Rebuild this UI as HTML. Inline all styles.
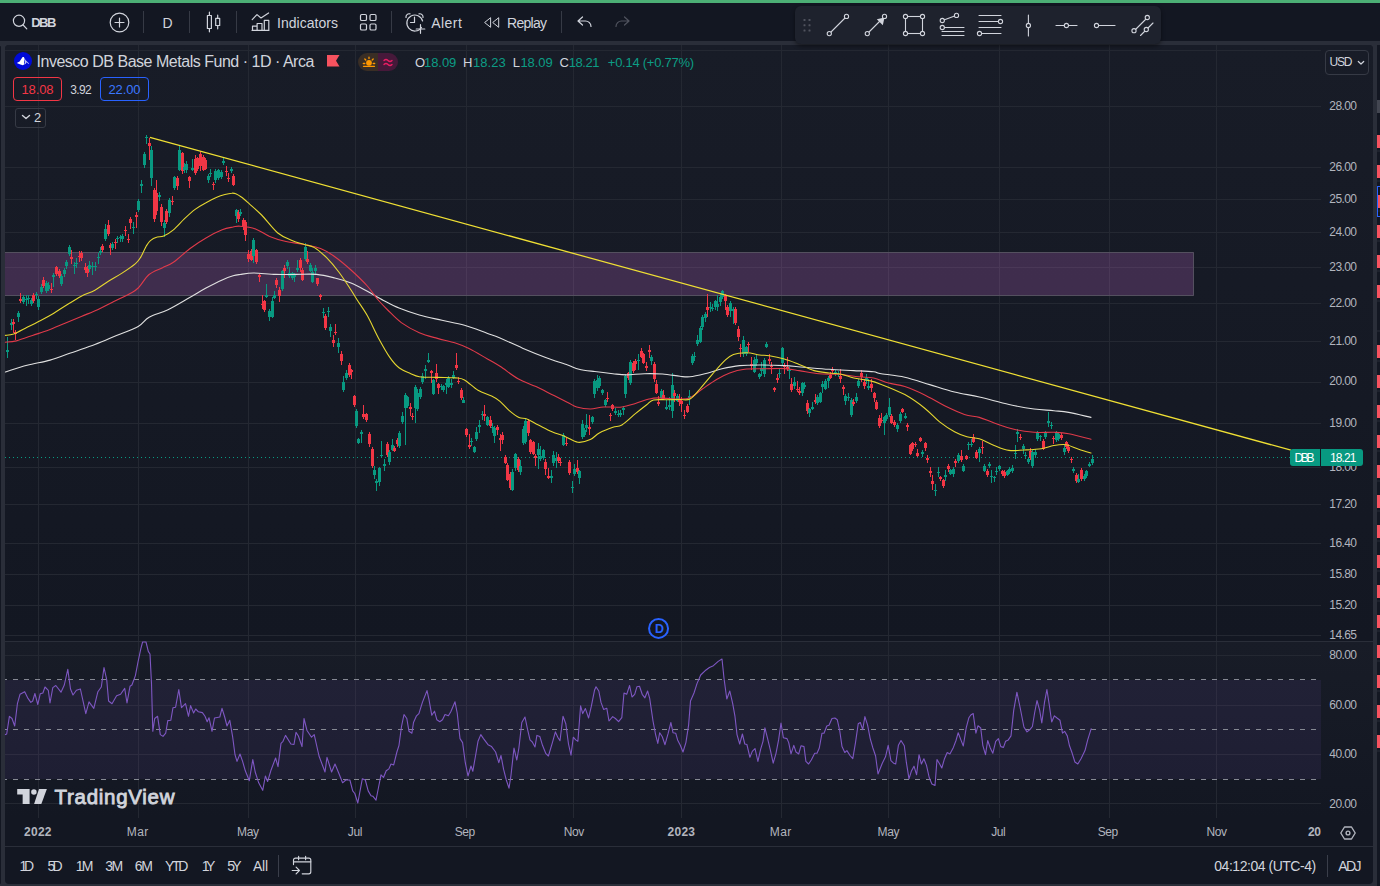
<!DOCTYPE html>
<html lang="en"><head><meta charset="utf-8"><title>DBB 18.21 — TradingView</title>
<style>
*{box-sizing:border-box;margin:0;padding:0}
html,body{width:1380px;height:886px;overflow:hidden;background:#2a2e39;font-family:"Liberation Sans",sans-serif;color:#d1d4dc}
.abs{position:absolute}
#greenbar{left:0;top:0;width:1380px;height:3px;background:#4caf75}
#topbar{left:0;top:3px;width:1380px;height:38px;background:#131722}
#chartbox{left:5px;top:45px;width:1368px;height:839px;border-radius:4px;background:#131722;overflow:hidden}
#pane1{left:0;top:0;width:1368px;height:596px;background:linear-gradient(#181c27,#131722)}
#pane2{left:0;top:597px;width:1368px;height:176px;background:linear-gradient(#181c27,#131722)}
#side{left:1377px;top:45px;width:3px;height:841px;background:#131722}
.plot{position:absolute;left:0;top:0}
.t{position:absolute;white-space:nowrap;line-height:1}
.tb{font-size:14px;color:#d1d4dc;top:15px}
.vsep{position:absolute;width:1px;background:#2a2e39}
.ax{font-size:12px;color:#b2b5be;left:1329px;letter-spacing:-0.45px}
.tl{font-size:12px;color:#b2b5be;top:826px;transform:translateX(-50%)}
.bt{font-size:14px;color:#d1d4dc;top:859px}
</style></head><body>
<div id="greenbar" class="abs"></div>
<div id="topbar" class="abs"></div>
<div id="chartbox" class="abs"><div id="pane1" class="abs"></div><div id="pane2" class="abs"></div></div>
<div id="side" class="abs"></div>
<div id="leftedge" class="abs" style="left:0;top:46px;width:1px;height:838px;background:#131722;border-radius:0 2px 2px 0"></div>
<svg class="plot" width="1380" height="886" viewBox="0 0 1380 886" shape-rendering="auto">
<g shape-rendering="crispEdges"><rect x="38" y="45" width="1" height="773" fill="#242832"/><rect x="138" y="45" width="1" height="773" fill="#242832"/><rect x="248" y="45" width="1" height="773" fill="#242832"/><rect x="355" y="45" width="1" height="773" fill="#242832"/><rect x="466" y="45" width="1" height="773" fill="#242832"/><rect x="573" y="45" width="1" height="773" fill="#242832"/><rect x="681" y="45" width="1" height="773" fill="#242832"/><rect x="781" y="45" width="1" height="773" fill="#242832"/><rect x="888" y="45" width="1" height="773" fill="#242832"/><rect x="999" y="45" width="1" height="773" fill="#242832"/><rect x="1109" y="45" width="1" height="773" fill="#242832"/><rect x="1216" y="45" width="1" height="773" fill="#242832"/><rect x="5" y="50" width="1316" height="1" fill="#242832"/><rect x="5" y="106" width="1316" height="1" fill="#242832"/><rect x="5" y="167" width="1316" height="1" fill="#242832"/><rect x="5" y="199" width="1316" height="1" fill="#242832"/><rect x="5" y="232" width="1316" height="1" fill="#242832"/><rect x="5" y="267" width="1316" height="1" fill="#242832"/><rect x="5" y="303" width="1316" height="1" fill="#242832"/><rect x="5" y="341" width="1316" height="1" fill="#242832"/><rect x="5" y="382" width="1316" height="1" fill="#242832"/><rect x="5" y="423" width="1316" height="1" fill="#242832"/><rect x="5" y="467" width="1316" height="1" fill="#242832"/><rect x="5" y="504" width="1316" height="1" fill="#242832"/><rect x="5" y="543" width="1316" height="1" fill="#242832"/><rect x="5" y="574" width="1316" height="1" fill="#242832"/><rect x="5" y="605" width="1316" height="1" fill="#242832"/><rect x="5" y="635" width="1316" height="1" fill="#242832"/><rect x="5" y="655" width="1316" height="1" fill="#242832"/><rect x="5" y="705" width="1316" height="1" fill="#242832"/><rect x="5" y="754" width="1316" height="1" fill="#242832"/><rect x="5" y="803" width="1316" height="1" fill="#242832"/></g>
<rect x="5" y="641" width="1368" height="1" fill="#2a2e39"/>
<rect x="5" y="252" width="1189" height="44" fill="rgba(186,104,200,0.25)"/><path d="M5 252.500H1193.500V295.500H5" fill="none" stroke="#54505f" stroke-width="1"/>
<rect x="5" y="680" width="1316" height="99" fill="rgba(126,87,194,0.1)"/>
<line x1="5" y1="679.5" x2="1321" y2="679.5" stroke="#868993" stroke-width="1" stroke-dasharray="5 6" stroke-dashoffset="3"/><line x1="5" y1="729.5" x2="1321" y2="729.5" stroke="#868993" stroke-width="1" stroke-dasharray="5 6" stroke-dashoffset="3"/><line x1="5" y1="779.5" x2="1321" y2="779.5" stroke="#868993" stroke-width="1" stroke-dasharray="5 6" stroke-dashoffset="3"/>
<line x1="5" y1="457.5" x2="1290" y2="457.5" stroke="#089981" stroke-width="1" stroke-dasharray="1 3"/>
<g shape-rendering="crispEdges"><rect x="7" y="337" width="1" height="21" fill="#089981"/><rect x="6" y="350" width="3" height="2" fill="#089981"/><rect x="11" y="319" width="1" height="11" fill="#089981"/><rect x="10" y="323" width="3" height="2" fill="#089981"/><rect x="13" y="319" width="1" height="14" fill="#f23645"/><rect x="12" y="322" width="3" height="2" fill="#f23645"/><rect x="15" y="330" width="1" height="10" fill="#f23645"/><rect x="14" y="332" width="3" height="2" fill="#f23645"/><rect x="18" y="311" width="1" height="11" fill="#089981"/><rect x="17" y="313" width="3" height="4" fill="#089981"/><rect x="20" y="293" width="1" height="10" fill="#f23645"/><rect x="19" y="299" width="3" height="2" fill="#f23645"/><rect x="23" y="295" width="1" height="9" fill="#089981"/><rect x="22" y="297" width="3" height="5" fill="#089981"/><rect x="26" y="295" width="1" height="11" fill="#089981"/><rect x="25" y="299" width="3" height="1" fill="#089981"/><rect x="28" y="295" width="1" height="9" fill="#089981"/><rect x="27" y="298" width="3" height="1" fill="#089981"/><rect x="31" y="298" width="1" height="8" fill="#089981"/><rect x="30" y="300" width="3" height="4" fill="#089981"/><rect x="33" y="293" width="1" height="10" fill="#f23645"/><rect x="32" y="295" width="3" height="6" fill="#f23645"/><rect x="36" y="292" width="1" height="7" fill="#089981"/><rect x="35" y="294" width="3" height="1" fill="#089981"/><rect x="38" y="296" width="1" height="14" fill="#089981"/><rect x="37" y="299" width="3" height="8" fill="#089981"/><rect x="41" y="284" width="1" height="10" fill="#089981"/><rect x="40" y="287" width="3" height="5" fill="#089981"/><rect x="43" y="277" width="1" height="11" fill="#f23645"/><rect x="42" y="280" width="3" height="6" fill="#f23645"/><rect x="46" y="281" width="1" height="12" fill="#089981"/><rect x="45" y="283" width="3" height="8" fill="#089981"/><rect x="48" y="282" width="1" height="9" fill="#089981"/><rect x="47" y="285" width="3" height="4" fill="#089981"/><rect x="51" y="283" width="1" height="10" fill="#f23645"/><rect x="50" y="289" width="3" height="1" fill="#f23645"/><rect x="53" y="273" width="1" height="14" fill="#089981"/><rect x="52" y="275" width="3" height="2" fill="#089981"/><rect x="56" y="266" width="1" height="10" fill="#f23645"/><rect x="55" y="267" width="3" height="7" fill="#f23645"/><rect x="59" y="269" width="1" height="9" fill="#f23645"/><rect x="58" y="271" width="3" height="5" fill="#f23645"/><rect x="61" y="274" width="1" height="12" fill="#089981"/><rect x="60" y="276" width="3" height="8" fill="#089981"/><rect x="64" y="268" width="1" height="9" fill="#089981"/><rect x="63" y="270" width="3" height="4" fill="#089981"/><rect x="66" y="260" width="1" height="9" fill="#089981"/><rect x="65" y="262" width="3" height="4" fill="#089981"/><rect x="69" y="245" width="1" height="11" fill="#089981"/><rect x="68" y="247" width="3" height="7" fill="#089981"/><rect x="71" y="250" width="1" height="14" fill="#f23645"/><rect x="70" y="257" width="3" height="2" fill="#f23645"/><rect x="74" y="262" width="1" height="12" fill="#089981"/><rect x="73" y="265" width="3" height="1" fill="#089981"/><rect x="76" y="258" width="1" height="10" fill="#089981"/><rect x="75" y="263" width="3" height="1" fill="#089981"/><rect x="79" y="251" width="1" height="11" fill="#f23645"/><rect x="78" y="256" width="3" height="1" fill="#f23645"/><rect x="81" y="251" width="1" height="10" fill="#f23645"/><rect x="80" y="253" width="3" height="5" fill="#f23645"/><rect x="85" y="263" width="1" height="10" fill="#f23645"/><rect x="84" y="267" width="3" height="3" fill="#f23645"/><rect x="87" y="266" width="1" height="11" fill="#f23645"/><rect x="86" y="268" width="3" height="5" fill="#f23645"/><rect x="89" y="261" width="1" height="11" fill="#089981"/><rect x="88" y="265" width="3" height="4" fill="#089981"/><rect x="92" y="262" width="1" height="13" fill="#089981"/><rect x="91" y="266" width="3" height="1" fill="#089981"/><rect x="95" y="262" width="1" height="9" fill="#089981"/><rect x="94" y="266" width="3" height="1" fill="#089981"/><rect x="98" y="253" width="1" height="11" fill="#089981"/><rect x="97" y="257" width="3" height="1" fill="#089981"/><rect x="100" y="247" width="1" height="8" fill="#089981"/><rect x="99" y="251" width="3" height="2" fill="#089981"/><rect x="102" y="244" width="1" height="8" fill="#f23645"/><rect x="101" y="246" width="3" height="4" fill="#f23645"/><rect x="105" y="224" width="1" height="17" fill="#089981"/><rect x="104" y="229" width="3" height="10" fill="#089981"/><rect x="108" y="220" width="1" height="16" fill="#f23645"/><rect x="107" y="225" width="3" height="9" fill="#f23645"/><rect x="110" y="243" width="1" height="12" fill="#f23645"/><rect x="109" y="245" width="3" height="3" fill="#f23645"/><rect x="112" y="242" width="1" height="8" fill="#089981"/><rect x="111" y="244" width="3" height="4" fill="#089981"/><rect x="115" y="239" width="1" height="10" fill="#f23645"/><rect x="114" y="242" width="3" height="1" fill="#f23645"/><rect x="117" y="236" width="1" height="7" fill="#089981"/><rect x="116" y="238" width="3" height="1" fill="#089981"/><rect x="120" y="235" width="1" height="7" fill="#089981"/><rect x="119" y="237" width="3" height="1" fill="#089981"/><rect x="122" y="234" width="1" height="8" fill="#089981"/><rect x="121" y="236" width="3" height="3" fill="#089981"/><rect x="125" y="226" width="1" height="10" fill="#f23645"/><rect x="124" y="230" width="3" height="1" fill="#f23645"/><rect x="128" y="234" width="1" height="9" fill="#f23645"/><rect x="127" y="239" width="3" height="1" fill="#f23645"/><rect x="130" y="217" width="1" height="12" fill="#f23645"/><rect x="129" y="219" width="3" height="4" fill="#f23645"/><rect x="133" y="222" width="1" height="12" fill="#089981"/><rect x="132" y="227" width="3" height="1" fill="#089981"/><rect x="136" y="212" width="1" height="16" fill="#f23645"/><rect x="135" y="215" width="3" height="2" fill="#f23645"/><rect x="138" y="199" width="1" height="13" fill="#089981"/><rect x="137" y="201" width="3" height="9" fill="#089981"/><rect x="141" y="180" width="1" height="13" fill="#089981"/><rect x="140" y="184" width="3" height="2" fill="#089981"/><rect x="144" y="152" width="1" height="16" fill="#089981"/><rect x="143" y="154" width="3" height="11" fill="#089981"/><rect x="146" y="135" width="1" height="9" fill="#089981"/><rect x="145" y="137" width="3" height="1" fill="#089981"/><rect x="149" y="138" width="1" height="22" fill="#f23645"/><rect x="148" y="143" width="3" height="3" fill="#f23645"/><rect x="151" y="146" width="1" height="40" fill="#089981"/><rect x="150" y="150" width="3" height="28" fill="#089981"/><rect x="154" y="188" width="1" height="34" fill="#f23645"/><rect x="153" y="190" width="3" height="29" fill="#f23645"/><rect x="156" y="180" width="1" height="35" fill="#f23645"/><rect x="155" y="193" width="3" height="18" fill="#f23645"/><rect x="159" y="192" width="1" height="9" fill="#089981"/><rect x="158" y="195" width="3" height="2" fill="#089981"/><rect x="161" y="204" width="1" height="22" fill="#f23645"/><rect x="160" y="207" width="3" height="15" fill="#f23645"/><rect x="164" y="220" width="1" height="17" fill="#089981"/><rect x="163" y="223" width="3" height="5" fill="#089981"/><rect x="166" y="209" width="1" height="15" fill="#f23645"/><rect x="165" y="211" width="3" height="11" fill="#f23645"/><rect x="169" y="198" width="1" height="19" fill="#089981"/><rect x="168" y="200" width="3" height="13" fill="#089981"/><rect x="172" y="196" width="1" height="9" fill="#f23645"/><rect x="171" y="201" width="3" height="1" fill="#f23645"/><rect x="174" y="176" width="1" height="14" fill="#089981"/><rect x="173" y="177" width="3" height="11" fill="#089981"/><rect x="177" y="176" width="1" height="14" fill="#f23645"/><rect x="176" y="178" width="3" height="8" fill="#f23645"/><rect x="179" y="146" width="1" height="25" fill="#089981"/><rect x="178" y="150" width="3" height="20" fill="#089981"/><rect x="182" y="152" width="1" height="22" fill="#f23645"/><rect x="181" y="153" width="3" height="18" fill="#f23645"/><rect x="184" y="163" width="1" height="10" fill="#089981"/><rect x="183" y="167" width="3" height="3" fill="#089981"/><rect x="186" y="161" width="1" height="12" fill="#089981"/><rect x="185" y="164" width="3" height="6" fill="#089981"/><rect x="189" y="176" width="1" height="12" fill="#f23645"/><rect x="188" y="177" width="3" height="4" fill="#f23645"/><rect x="192" y="159" width="1" height="12" fill="#089981"/><rect x="191" y="168" width="3" height="2" fill="#089981"/><rect x="195" y="155" width="1" height="20" fill="#f23645"/><rect x="194" y="159" width="3" height="14" fill="#f23645"/><rect x="197" y="157" width="1" height="14" fill="#f23645"/><rect x="196" y="158" width="3" height="11" fill="#f23645"/><rect x="200" y="151" width="1" height="20" fill="#f23645"/><rect x="199" y="154" width="3" height="12" fill="#f23645"/><rect x="203" y="155" width="1" height="16" fill="#f23645"/><rect x="202" y="157" width="3" height="13" fill="#f23645"/><rect x="205" y="158" width="1" height="12" fill="#f23645"/><rect x="204" y="160" width="3" height="9" fill="#f23645"/><rect x="208" y="174" width="1" height="9" fill="#089981"/><rect x="207" y="176" width="3" height="4" fill="#089981"/><rect x="210" y="169" width="1" height="8" fill="#089981"/><rect x="209" y="173" width="3" height="1" fill="#089981"/><rect x="213" y="182" width="1" height="8" fill="#f23645"/><rect x="212" y="184" width="3" height="1" fill="#f23645"/><rect x="215" y="169" width="1" height="14" fill="#089981"/><rect x="214" y="171" width="3" height="9" fill="#089981"/><rect x="218" y="169" width="1" height="11" fill="#089981"/><rect x="217" y="170" width="3" height="8" fill="#089981"/><rect x="221" y="170" width="1" height="9" fill="#089981"/><rect x="220" y="172" width="3" height="5" fill="#089981"/><rect x="223" y="157" width="1" height="8" fill="#089981"/><rect x="222" y="161" width="3" height="2" fill="#089981"/><rect x="226" y="166" width="1" height="10" fill="#f23645"/><rect x="225" y="171" width="3" height="1" fill="#f23645"/><rect x="228" y="173" width="1" height="9" fill="#f23645"/><rect x="227" y="178" width="3" height="1" fill="#f23645"/><rect x="231" y="167" width="1" height="6" fill="#089981"/><rect x="230" y="169" width="3" height="2" fill="#089981"/><rect x="233" y="174" width="1" height="12" fill="#f23645"/><rect x="232" y="176" width="3" height="9" fill="#f23645"/><rect x="236" y="209" width="1" height="14" fill="#089981"/><rect x="235" y="210" width="3" height="6" fill="#089981"/><rect x="238" y="210" width="1" height="12" fill="#f23645"/><rect x="237" y="212" width="3" height="7" fill="#f23645"/><rect x="240" y="209" width="1" height="7" fill="#089981"/><rect x="239" y="212" width="3" height="2" fill="#089981"/><rect x="243" y="218" width="1" height="12" fill="#f23645"/><rect x="242" y="220" width="3" height="6" fill="#f23645"/><rect x="245" y="220" width="1" height="21" fill="#f23645"/><rect x="244" y="222" width="3" height="13" fill="#f23645"/><rect x="248" y="250" width="1" height="12" fill="#f23645"/><rect x="247" y="254" width="3" height="5" fill="#f23645"/><rect x="251" y="249" width="1" height="12" fill="#f23645"/><rect x="250" y="251" width="3" height="9" fill="#f23645"/><rect x="253" y="238" width="1" height="25" fill="#089981"/><rect x="252" y="240" width="3" height="16" fill="#089981"/><rect x="256" y="249" width="1" height="15" fill="#f23645"/><rect x="255" y="250" width="3" height="12" fill="#f23645"/><rect x="259" y="274" width="1" height="8" fill="#f23645"/><rect x="258" y="275" width="3" height="2" fill="#f23645"/><rect x="262" y="295" width="1" height="14" fill="#f23645"/><rect x="261" y="304" width="3" height="1" fill="#f23645"/><rect x="264" y="300" width="1" height="12" fill="#f23645"/><rect x="263" y="301" width="3" height="9" fill="#f23645"/><rect x="266" y="284" width="1" height="14" fill="#089981"/><rect x="265" y="295" width="3" height="2" fill="#089981"/><rect x="269" y="309" width="1" height="12" fill="#089981"/><rect x="268" y="311" width="3" height="6" fill="#089981"/><rect x="272" y="297" width="1" height="21" fill="#089981"/><rect x="271" y="301" width="3" height="16" fill="#089981"/><rect x="274" y="291" width="1" height="8" fill="#089981"/><rect x="273" y="295" width="3" height="3" fill="#089981"/><rect x="276" y="278" width="1" height="10" fill="#f23645"/><rect x="275" y="280" width="3" height="5" fill="#f23645"/><rect x="279" y="287" width="1" height="15" fill="#f23645"/><rect x="278" y="290" width="3" height="6" fill="#f23645"/><rect x="282" y="270" width="1" height="21" fill="#089981"/><rect x="281" y="271" width="3" height="18" fill="#089981"/><rect x="284" y="265" width="1" height="13" fill="#f23645"/><rect x="283" y="268" width="3" height="3" fill="#f23645"/><rect x="287" y="260" width="1" height="9" fill="#089981"/><rect x="286" y="262" width="3" height="4" fill="#089981"/><rect x="289" y="267" width="1" height="11" fill="#089981"/><rect x="288" y="273" width="3" height="3" fill="#089981"/><rect x="292" y="272" width="1" height="8" fill="#089981"/><rect x="291" y="273" width="3" height="5" fill="#089981"/><rect x="294" y="273" width="1" height="9" fill="#089981"/><rect x="293" y="275" width="3" height="2" fill="#089981"/><rect x="297" y="260" width="1" height="12" fill="#089981"/><rect x="296" y="268" width="3" height="2" fill="#089981"/><rect x="300" y="258" width="1" height="14" fill="#f23645"/><rect x="299" y="260" width="3" height="8" fill="#f23645"/><rect x="302" y="268" width="1" height="13" fill="#f23645"/><rect x="301" y="270" width="3" height="10" fill="#f23645"/><rect x="305" y="243" width="1" height="18" fill="#089981"/><rect x="304" y="247" width="3" height="12" fill="#089981"/><rect x="307" y="251" width="1" height="13" fill="#f23645"/><rect x="306" y="259" width="3" height="3" fill="#f23645"/><rect x="310" y="263" width="1" height="9" fill="#089981"/><rect x="309" y="265" width="3" height="6" fill="#089981"/><rect x="312" y="268" width="1" height="15" fill="#089981"/><rect x="311" y="272" width="3" height="10" fill="#089981"/><rect x="315" y="265" width="1" height="9" fill="#089981"/><rect x="314" y="268" width="3" height="3" fill="#089981"/><rect x="317" y="278" width="1" height="8" fill="#f23645"/><rect x="316" y="278" width="3" height="6" fill="#f23645"/><rect x="320" y="294" width="1" height="6" fill="#f23645"/><rect x="319" y="295" width="3" height="2" fill="#f23645"/><rect x="323" y="308" width="1" height="10" fill="#089981"/><rect x="322" y="312" width="3" height="1" fill="#089981"/><rect x="325" y="314" width="1" height="16" fill="#f23645"/><rect x="324" y="316" width="3" height="12" fill="#f23645"/><rect x="328" y="307" width="1" height="10" fill="#089981"/><rect x="327" y="311" width="3" height="1" fill="#089981"/><rect x="330" y="324" width="1" height="13" fill="#089981"/><rect x="329" y="327" width="3" height="4" fill="#089981"/><rect x="333" y="335" width="1" height="12" fill="#f23645"/><rect x="332" y="340" width="3" height="3" fill="#f23645"/><rect x="335" y="324" width="1" height="11" fill="#f23645"/><rect x="334" y="332" width="3" height="1" fill="#f23645"/><rect x="338" y="338" width="1" height="15" fill="#089981"/><rect x="337" y="343" width="3" height="4" fill="#089981"/><rect x="341" y="351" width="1" height="14" fill="#f23645"/><rect x="340" y="354" width="3" height="7" fill="#f23645"/><rect x="343" y="376" width="1" height="16" fill="#089981"/><rect x="342" y="382" width="3" height="8" fill="#089981"/><rect x="346" y="370" width="1" height="10" fill="#089981"/><rect x="345" y="373" width="3" height="5" fill="#089981"/><rect x="349" y="363" width="1" height="14" fill="#f23645"/><rect x="348" y="365" width="3" height="10" fill="#f23645"/><rect x="351" y="369" width="1" height="10" fill="#f23645"/><rect x="350" y="370" width="3" height="2" fill="#f23645"/><rect x="354" y="395" width="1" height="12" fill="#f23645"/><rect x="353" y="396" width="3" height="9" fill="#f23645"/><rect x="356" y="409" width="1" height="19" fill="#089981"/><rect x="355" y="411" width="3" height="15" fill="#089981"/><rect x="358" y="438" width="1" height="6" fill="#089981"/><rect x="357" y="439" width="3" height="4" fill="#089981"/><rect x="361" y="430" width="1" height="13" fill="#089981"/><rect x="360" y="432" width="3" height="2" fill="#089981"/><rect x="363" y="405" width="1" height="14" fill="#f23645"/><rect x="362" y="414" width="3" height="3" fill="#f23645"/><rect x="366" y="413" width="1" height="9" fill="#f23645"/><rect x="365" y="414" width="3" height="6" fill="#f23645"/><rect x="369" y="432" width="1" height="15" fill="#f23645"/><rect x="368" y="434" width="3" height="10" fill="#f23645"/><rect x="372" y="447" width="1" height="21" fill="#f23645"/><rect x="371" y="449" width="3" height="17" fill="#f23645"/><rect x="374" y="466" width="1" height="13" fill="#089981"/><rect x="373" y="470" width="3" height="5" fill="#089981"/><rect x="376" y="479" width="1" height="12" fill="#089981"/><rect x="375" y="481" width="3" height="2" fill="#089981"/><rect x="379" y="467" width="1" height="19" fill="#089981"/><rect x="378" y="468" width="3" height="14" fill="#089981"/><rect x="381" y="441" width="1" height="16" fill="#089981"/><rect x="380" y="455" width="3" height="1" fill="#089981"/><rect x="384" y="459" width="1" height="12" fill="#089981"/><rect x="383" y="464" width="3" height="2" fill="#089981"/><rect x="387" y="442" width="1" height="15" fill="#f23645"/><rect x="386" y="444" width="3" height="11" fill="#f23645"/><rect x="389" y="450" width="1" height="15" fill="#089981"/><rect x="388" y="452" width="3" height="10" fill="#089981"/><rect x="392" y="439" width="1" height="12" fill="#089981"/><rect x="391" y="445" width="3" height="5" fill="#089981"/><rect x="394" y="446" width="1" height="6" fill="#f23645"/><rect x="393" y="448" width="3" height="3" fill="#f23645"/><rect x="397" y="438" width="1" height="9" fill="#f23645"/><rect x="396" y="440" width="3" height="4" fill="#f23645"/><rect x="399" y="431" width="1" height="17" fill="#089981"/><rect x="398" y="433" width="3" height="13" fill="#089981"/><rect x="402" y="412" width="1" height="12" fill="#089981"/><rect x="401" y="416" width="3" height="6" fill="#089981"/><rect x="405" y="393" width="1" height="52" fill="#089981"/><rect x="404" y="395" width="3" height="13" fill="#089981"/><rect x="407" y="396" width="1" height="12" fill="#089981"/><rect x="406" y="397" width="3" height="9" fill="#089981"/><rect x="410" y="403" width="1" height="13" fill="#f23645"/><rect x="409" y="407" width="3" height="2" fill="#f23645"/><rect x="412" y="413" width="1" height="7" fill="#f23645"/><rect x="411" y="416" width="3" height="1" fill="#f23645"/><rect x="415" y="385" width="1" height="38" fill="#089981"/><rect x="414" y="387" width="3" height="21" fill="#089981"/><rect x="417" y="389" width="1" height="22" fill="#089981"/><rect x="416" y="393" width="3" height="16" fill="#089981"/><rect x="420" y="387" width="1" height="12" fill="#089981"/><rect x="419" y="389" width="3" height="8" fill="#089981"/><rect x="422" y="373" width="1" height="11" fill="#089981"/><rect x="421" y="376" width="3" height="6" fill="#089981"/><rect x="425" y="365" width="1" height="14" fill="#089981"/><rect x="424" y="369" width="3" height="2" fill="#089981"/><rect x="428" y="353" width="1" height="10" fill="#089981"/><rect x="427" y="360" width="3" height="2" fill="#089981"/><rect x="431" y="370" width="1" height="13" fill="#f23645"/><rect x="430" y="371" width="3" height="2" fill="#f23645"/><rect x="433" y="379" width="1" height="16" fill="#089981"/><rect x="432" y="380" width="3" height="14" fill="#089981"/><rect x="436" y="364" width="1" height="18" fill="#f23645"/><rect x="435" y="373" width="3" height="6" fill="#f23645"/><rect x="438" y="383" width="1" height="11" fill="#f23645"/><rect x="437" y="384" width="3" height="4" fill="#f23645"/><rect x="441" y="384" width="1" height="6" fill="#089981"/><rect x="440" y="386" width="3" height="1" fill="#089981"/><rect x="443" y="385" width="1" height="7" fill="#089981"/><rect x="442" y="386" width="3" height="4" fill="#089981"/><rect x="446" y="379" width="1" height="15" fill="#089981"/><rect x="445" y="383" width="3" height="2" fill="#089981"/><rect x="448" y="376" width="1" height="12" fill="#089981"/><rect x="447" y="378" width="3" height="9" fill="#089981"/><rect x="451" y="379" width="1" height="9" fill="#089981"/><rect x="450" y="383" width="3" height="2" fill="#089981"/><rect x="453" y="371" width="1" height="8" fill="#089981"/><rect x="452" y="375" width="3" height="3" fill="#089981"/><rect x="456" y="353" width="1" height="17" fill="#f23645"/><rect x="455" y="365" width="3" height="3" fill="#f23645"/><rect x="458" y="377" width="1" height="7" fill="#f23645"/><rect x="457" y="381" width="3" height="1" fill="#f23645"/><rect x="461" y="388" width="1" height="12" fill="#f23645"/><rect x="460" y="390" width="3" height="8" fill="#f23645"/><rect x="463" y="397" width="1" height="6" fill="#089981"/><rect x="462" y="400" width="3" height="3" fill="#089981"/><rect x="466" y="428" width="1" height="9" fill="#f23645"/><rect x="465" y="429" width="3" height="6" fill="#f23645"/><rect x="469" y="434" width="1" height="15" fill="#f23645"/><rect x="468" y="445" width="3" height="2" fill="#f23645"/><rect x="471" y="438" width="1" height="8" fill="#089981"/><rect x="470" y="441" width="3" height="1" fill="#089981"/><rect x="474" y="446" width="1" height="7" fill="#089981"/><rect x="473" y="447" width="3" height="5" fill="#089981"/><rect x="476" y="427" width="1" height="14" fill="#089981"/><rect x="475" y="432" width="3" height="7" fill="#089981"/><rect x="479" y="420" width="1" height="13" fill="#089981"/><rect x="478" y="425" width="3" height="2" fill="#089981"/><rect x="482" y="411" width="1" height="9" fill="#089981"/><rect x="481" y="414" width="3" height="1" fill="#089981"/><rect x="484" y="405" width="1" height="16" fill="#f23645"/><rect x="483" y="414" width="3" height="2" fill="#f23645"/><rect x="487" y="416" width="1" height="10" fill="#089981"/><rect x="486" y="417" width="3" height="8" fill="#089981"/><rect x="490" y="416" width="1" height="12" fill="#f23645"/><rect x="489" y="420" width="3" height="6" fill="#f23645"/><rect x="492" y="423" width="1" height="10" fill="#089981"/><rect x="491" y="427" width="3" height="1" fill="#089981"/><rect x="494" y="426" width="1" height="17" fill="#089981"/><rect x="493" y="428" width="3" height="8" fill="#089981"/><rect x="497" y="425" width="1" height="10" fill="#f23645"/><rect x="496" y="427" width="3" height="3" fill="#f23645"/><rect x="500" y="434" width="1" height="17" fill="#f23645"/><rect x="499" y="438" width="3" height="2" fill="#f23645"/><rect x="502" y="432" width="1" height="12" fill="#f23645"/><rect x="501" y="435" width="3" height="5" fill="#f23645"/><rect x="505" y="455" width="1" height="9" fill="#f23645"/><rect x="504" y="457" width="3" height="6" fill="#f23645"/><rect x="507" y="463" width="1" height="18" fill="#f23645"/><rect x="506" y="465" width="3" height="15" fill="#f23645"/><rect x="510" y="472" width="1" height="18" fill="#f23645"/><rect x="509" y="474" width="3" height="14" fill="#f23645"/><rect x="512" y="469" width="1" height="22" fill="#089981"/><rect x="511" y="472" width="3" height="18" fill="#089981"/><rect x="515" y="453" width="1" height="18" fill="#089981"/><rect x="514" y="454" width="3" height="14" fill="#089981"/><rect x="518" y="457" width="1" height="15" fill="#f23645"/><rect x="517" y="459" width="3" height="11" fill="#f23645"/><rect x="520" y="460" width="1" height="15" fill="#089981"/><rect x="519" y="466" width="3" height="6" fill="#089981"/><rect x="523" y="426" width="1" height="19" fill="#089981"/><rect x="522" y="429" width="3" height="14" fill="#089981"/><rect x="525" y="418" width="1" height="26" fill="#089981"/><rect x="524" y="421" width="3" height="21" fill="#089981"/><rect x="528" y="419" width="1" height="17" fill="#f23645"/><rect x="527" y="421" width="3" height="12" fill="#f23645"/><rect x="530" y="439" width="1" height="15" fill="#f23645"/><rect x="529" y="440" width="3" height="12" fill="#f23645"/><rect x="533" y="441" width="1" height="14" fill="#f23645"/><rect x="532" y="442" width="3" height="12" fill="#f23645"/><rect x="535" y="454" width="1" height="12" fill="#f23645"/><rect x="534" y="456" width="3" height="2" fill="#f23645"/><rect x="538" y="443" width="1" height="26" fill="#089981"/><rect x="537" y="449" width="3" height="6" fill="#089981"/><rect x="540" y="446" width="1" height="15" fill="#089981"/><rect x="539" y="456" width="3" height="3" fill="#089981"/><rect x="543" y="449" width="1" height="11" fill="#089981"/><rect x="542" y="450" width="3" height="8" fill="#089981"/><rect x="545" y="459" width="1" height="16" fill="#f23645"/><rect x="544" y="462" width="3" height="7" fill="#f23645"/><rect x="548" y="468" width="1" height="11" fill="#f23645"/><rect x="547" y="476" width="3" height="2" fill="#f23645"/><rect x="551" y="470" width="1" height="13" fill="#089981"/><rect x="550" y="476" width="3" height="2" fill="#089981"/><rect x="553" y="451" width="1" height="15" fill="#089981"/><rect x="552" y="455" width="3" height="8" fill="#089981"/><rect x="556" y="452" width="1" height="16" fill="#089981"/><rect x="555" y="458" width="3" height="3" fill="#089981"/><rect x="558" y="454" width="1" height="9" fill="#f23645"/><rect x="557" y="457" width="3" height="4" fill="#f23645"/><rect x="560" y="458" width="1" height="8" fill="#f23645"/><rect x="559" y="462" width="3" height="1" fill="#f23645"/><rect x="563" y="433" width="1" height="13" fill="#089981"/><rect x="562" y="435" width="3" height="10" fill="#089981"/><rect x="566" y="437" width="1" height="9" fill="#f23645"/><rect x="565" y="443" width="3" height="1" fill="#f23645"/><rect x="569" y="460" width="1" height="15" fill="#f23645"/><rect x="568" y="462" width="3" height="11" fill="#f23645"/><rect x="572" y="481" width="1" height="12" fill="#089981"/><rect x="571" y="487" width="3" height="1" fill="#089981"/><rect x="574" y="464" width="1" height="12" fill="#089981"/><rect x="573" y="469" width="3" height="5" fill="#089981"/><rect x="577" y="460" width="1" height="14" fill="#f23645"/><rect x="576" y="468" width="3" height="4" fill="#f23645"/><rect x="579" y="470" width="1" height="14" fill="#089981"/><rect x="578" y="471" width="3" height="7" fill="#089981"/><rect x="582" y="420" width="1" height="19" fill="#089981"/><rect x="581" y="424" width="3" height="13" fill="#089981"/><rect x="584" y="428" width="1" height="9" fill="#089981"/><rect x="583" y="430" width="3" height="5" fill="#089981"/><rect x="586" y="414" width="1" height="18" fill="#089981"/><rect x="585" y="425" width="3" height="3" fill="#089981"/><rect x="589" y="415" width="1" height="20" fill="#f23645"/><rect x="588" y="427" width="3" height="2" fill="#f23645"/><rect x="592" y="416" width="1" height="8" fill="#089981"/><rect x="591" y="417" width="3" height="5" fill="#089981"/><rect x="594" y="379" width="1" height="19" fill="#089981"/><rect x="593" y="381" width="3" height="13" fill="#089981"/><rect x="597" y="375" width="1" height="16" fill="#089981"/><rect x="596" y="380" width="3" height="8" fill="#089981"/><rect x="599" y="376" width="1" height="12" fill="#089981"/><rect x="598" y="378" width="3" height="8" fill="#089981"/><rect x="602" y="389" width="1" height="6" fill="#089981"/><rect x="601" y="390" width="3" height="3" fill="#089981"/><rect x="605" y="399" width="1" height="8" fill="#089981"/><rect x="604" y="400" width="3" height="5" fill="#089981"/><rect x="607" y="392" width="1" height="10" fill="#f23645"/><rect x="606" y="398" width="3" height="1" fill="#f23645"/><rect x="610" y="413" width="1" height="8" fill="#f23645"/><rect x="609" y="415" width="3" height="1" fill="#f23645"/><rect x="612" y="404" width="1" height="7" fill="#f23645"/><rect x="611" y="405" width="3" height="4" fill="#f23645"/><rect x="615" y="408" width="1" height="7" fill="#089981"/><rect x="614" y="411" width="3" height="2" fill="#089981"/><rect x="618" y="410" width="1" height="7" fill="#089981"/><rect x="617" y="414" width="3" height="1" fill="#089981"/><rect x="620" y="410" width="1" height="7" fill="#089981"/><rect x="619" y="413" width="3" height="2" fill="#089981"/><rect x="623" y="406" width="1" height="9" fill="#089981"/><rect x="622" y="408" width="3" height="2" fill="#089981"/><rect x="625" y="374" width="1" height="24" fill="#089981"/><rect x="624" y="376" width="3" height="18" fill="#089981"/><rect x="628" y="372" width="1" height="8" fill="#f23645"/><rect x="627" y="373" width="3" height="5" fill="#f23645"/><rect x="630" y="360" width="1" height="25" fill="#089981"/><rect x="629" y="362" width="3" height="21" fill="#089981"/><rect x="633" y="361" width="1" height="12" fill="#f23645"/><rect x="632" y="363" width="3" height="8" fill="#f23645"/><rect x="635" y="359" width="1" height="11" fill="#f23645"/><rect x="634" y="361" width="3" height="3" fill="#f23645"/><rect x="638" y="354" width="1" height="16" fill="#089981"/><rect x="637" y="360" width="3" height="1" fill="#089981"/><rect x="641" y="348" width="1" height="10" fill="#f23645"/><rect x="640" y="351" width="3" height="6" fill="#f23645"/><rect x="643" y="353" width="1" height="11" fill="#f23645"/><rect x="642" y="354" width="3" height="9" fill="#f23645"/><rect x="646" y="362" width="1" height="9" fill="#f23645"/><rect x="645" y="366" width="3" height="2" fill="#f23645"/><rect x="649" y="345" width="1" height="13" fill="#f23645"/><rect x="648" y="350" width="3" height="2" fill="#f23645"/><rect x="651" y="355" width="1" height="10" fill="#089981"/><rect x="650" y="357" width="3" height="4" fill="#089981"/><rect x="654" y="362" width="1" height="20" fill="#f23645"/><rect x="653" y="364" width="3" height="15" fill="#f23645"/><rect x="656" y="380" width="1" height="14" fill="#f23645"/><rect x="655" y="384" width="3" height="9" fill="#f23645"/><rect x="658" y="396" width="1" height="10" fill="#f23645"/><rect x="657" y="402" width="3" height="2" fill="#f23645"/><rect x="661" y="389" width="1" height="11" fill="#089981"/><rect x="660" y="391" width="3" height="7" fill="#089981"/><rect x="663" y="390" width="1" height="10" fill="#f23645"/><rect x="662" y="395" width="3" height="4" fill="#f23645"/><rect x="666" y="400" width="1" height="10" fill="#089981"/><rect x="665" y="407" width="3" height="2" fill="#089981"/><rect x="669" y="397" width="1" height="13" fill="#089981"/><rect x="668" y="405" width="3" height="2" fill="#089981"/><rect x="672" y="373" width="1" height="45" fill="#089981"/><rect x="671" y="385" width="3" height="26" fill="#089981"/><rect x="674" y="390" width="1" height="12" fill="#f23645"/><rect x="673" y="393" width="3" height="3" fill="#f23645"/><rect x="677" y="394" width="1" height="8" fill="#089981"/><rect x="676" y="396" width="3" height="5" fill="#089981"/><rect x="679" y="394" width="1" height="12" fill="#f23645"/><rect x="678" y="400" width="3" height="2" fill="#f23645"/><rect x="681" y="397" width="1" height="15" fill="#f23645"/><rect x="680" y="401" width="3" height="3" fill="#f23645"/><rect x="684" y="410" width="1" height="9" fill="#f23645"/><rect x="683" y="415" width="3" height="1" fill="#f23645"/><rect x="687" y="404" width="1" height="9" fill="#f23645"/><rect x="686" y="406" width="3" height="6" fill="#f23645"/><rect x="689" y="390" width="1" height="15" fill="#089981"/><rect x="688" y="396" width="3" height="2" fill="#089981"/><rect x="692" y="354" width="1" height="11" fill="#089981"/><rect x="691" y="356" width="3" height="7" fill="#089981"/><rect x="694" y="352" width="1" height="9" fill="#089981"/><rect x="693" y="356" width="3" height="1" fill="#089981"/><rect x="697" y="335" width="1" height="11" fill="#089981"/><rect x="696" y="340" width="3" height="4" fill="#089981"/><rect x="700" y="326" width="1" height="17" fill="#089981"/><rect x="699" y="328" width="3" height="14" fill="#089981"/><rect x="702" y="315" width="1" height="15" fill="#089981"/><rect x="701" y="317" width="3" height="10" fill="#089981"/><rect x="705" y="312" width="1" height="10" fill="#089981"/><rect x="704" y="314" width="3" height="4" fill="#089981"/><rect x="707" y="294" width="1" height="23" fill="#f23645"/><rect x="706" y="307" width="3" height="3" fill="#f23645"/><rect x="710" y="302" width="1" height="10" fill="#089981"/><rect x="709" y="307" width="3" height="1" fill="#089981"/><rect x="712" y="304" width="1" height="7" fill="#089981"/><rect x="711" y="308" width="3" height="1" fill="#089981"/><rect x="715" y="300" width="1" height="10" fill="#089981"/><rect x="714" y="301" width="3" height="6" fill="#089981"/><rect x="717" y="295" width="1" height="16" fill="#089981"/><rect x="716" y="304" width="3" height="3" fill="#089981"/><rect x="720" y="294" width="1" height="12" fill="#089981"/><rect x="719" y="297" width="3" height="5" fill="#089981"/><rect x="722" y="290" width="1" height="9" fill="#089981"/><rect x="721" y="291" width="3" height="6" fill="#089981"/><rect x="725" y="294" width="1" height="16" fill="#f23645"/><rect x="724" y="295" width="3" height="6" fill="#f23645"/><rect x="727" y="305" width="1" height="12" fill="#f23645"/><rect x="726" y="307" width="3" height="8" fill="#f23645"/><rect x="730" y="301" width="1" height="16" fill="#089981"/><rect x="729" y="303" width="3" height="8" fill="#089981"/><rect x="733" y="307" width="1" height="17" fill="#089981"/><rect x="732" y="309" width="3" height="2" fill="#089981"/><rect x="735" y="307" width="1" height="18" fill="#f23645"/><rect x="734" y="309" width="3" height="14" fill="#f23645"/><rect x="738" y="326" width="1" height="15" fill="#f23645"/><rect x="737" y="329" width="3" height="8" fill="#f23645"/><rect x="740" y="344" width="1" height="13" fill="#f23645"/><rect x="739" y="348" width="3" height="1" fill="#f23645"/><rect x="743" y="336" width="1" height="21" fill="#089981"/><rect x="742" y="340" width="3" height="14" fill="#089981"/><rect x="746" y="346" width="1" height="10" fill="#089981"/><rect x="745" y="347" width="3" height="7" fill="#089981"/><rect x="748" y="342" width="1" height="10" fill="#f23645"/><rect x="747" y="344" width="3" height="1" fill="#f23645"/><rect x="751" y="357" width="1" height="13" fill="#f23645"/><rect x="750" y="364" width="3" height="2" fill="#f23645"/><rect x="754" y="357" width="1" height="16" fill="#089981"/><rect x="753" y="360" width="3" height="12" fill="#089981"/><rect x="756" y="354" width="1" height="12" fill="#089981"/><rect x="755" y="359" width="3" height="4" fill="#089981"/><rect x="759" y="373" width="1" height="6" fill="#089981"/><rect x="758" y="374" width="3" height="3" fill="#089981"/><rect x="761" y="362" width="1" height="14" fill="#089981"/><rect x="760" y="368" width="3" height="3" fill="#089981"/><rect x="764" y="358" width="1" height="19" fill="#089981"/><rect x="763" y="360" width="3" height="14" fill="#089981"/><rect x="766" y="342" width="1" height="6" fill="#089981"/><rect x="765" y="344" width="3" height="3" fill="#089981"/><rect x="769" y="354" width="1" height="10" fill="#f23645"/><rect x="768" y="359" width="3" height="2" fill="#f23645"/><rect x="771" y="362" width="1" height="12" fill="#f23645"/><rect x="770" y="366" width="3" height="1" fill="#f23645"/><rect x="774" y="387" width="1" height="5" fill="#f23645"/><rect x="773" y="388" width="3" height="2" fill="#f23645"/><rect x="777" y="374" width="1" height="9" fill="#f23645"/><rect x="776" y="378" width="3" height="2" fill="#f23645"/><rect x="779" y="369" width="1" height="9" fill="#089981"/><rect x="778" y="373" width="3" height="1" fill="#089981"/><rect x="782" y="347" width="1" height="19" fill="#089981"/><rect x="781" y="348" width="3" height="15" fill="#089981"/><rect x="784" y="363" width="1" height="11" fill="#f23645"/><rect x="783" y="366" width="3" height="1" fill="#f23645"/><rect x="787" y="357" width="1" height="14" fill="#f23645"/><rect x="786" y="367" width="3" height="2" fill="#f23645"/><rect x="789" y="367" width="1" height="12" fill="#089981"/><rect x="788" y="370" width="3" height="1" fill="#089981"/><rect x="791" y="378" width="1" height="14" fill="#f23645"/><rect x="790" y="384" width="3" height="6" fill="#f23645"/><rect x="794" y="377" width="1" height="12" fill="#089981"/><rect x="793" y="382" width="3" height="4" fill="#089981"/><rect x="797" y="381" width="1" height="11" fill="#f23645"/><rect x="796" y="389" width="3" height="1" fill="#f23645"/><rect x="799" y="387" width="1" height="8" fill="#f23645"/><rect x="798" y="391" width="3" height="2" fill="#f23645"/><rect x="802" y="382" width="1" height="14" fill="#089981"/><rect x="801" y="383" width="3" height="10" fill="#089981"/><rect x="804" y="382" width="1" height="7" fill="#089981"/><rect x="803" y="385" width="3" height="2" fill="#089981"/><rect x="807" y="400" width="1" height="14" fill="#f23645"/><rect x="806" y="403" width="3" height="8" fill="#f23645"/><rect x="809" y="408" width="1" height="9" fill="#089981"/><rect x="808" y="409" width="3" height="4" fill="#089981"/><rect x="812" y="402" width="1" height="8" fill="#089981"/><rect x="811" y="407" width="3" height="2" fill="#089981"/><rect x="815" y="394" width="1" height="10" fill="#f23645"/><rect x="814" y="400" width="3" height="2" fill="#f23645"/><rect x="817" y="395" width="1" height="10" fill="#089981"/><rect x="816" y="397" width="3" height="6" fill="#089981"/><rect x="820" y="392" width="1" height="11" fill="#089981"/><rect x="819" y="393" width="3" height="9" fill="#089981"/><rect x="822" y="381" width="1" height="12" fill="#089981"/><rect x="821" y="384" width="3" height="3" fill="#089981"/><rect x="825" y="379" width="1" height="11" fill="#089981"/><rect x="824" y="381" width="3" height="8" fill="#089981"/><rect x="828" y="376" width="1" height="12" fill="#089981"/><rect x="827" y="378" width="3" height="3" fill="#089981"/><rect x="830" y="372" width="1" height="7" fill="#f23645"/><rect x="829" y="375" width="3" height="3" fill="#f23645"/><rect x="832" y="367" width="1" height="7" fill="#f23645"/><rect x="831" y="370" width="3" height="1" fill="#f23645"/><rect x="835" y="370" width="1" height="6" fill="#089981"/><rect x="834" y="372" width="3" height="1" fill="#089981"/><rect x="838" y="371" width="1" height="6" fill="#089981"/><rect x="837" y="374" width="3" height="1" fill="#089981"/><rect x="840" y="369" width="1" height="14" fill="#f23645"/><rect x="839" y="376" width="3" height="3" fill="#f23645"/><rect x="843" y="385" width="1" height="10" fill="#f23645"/><rect x="842" y="387" width="3" height="2" fill="#f23645"/><rect x="845" y="394" width="1" height="11" fill="#089981"/><rect x="844" y="396" width="3" height="5" fill="#089981"/><rect x="848" y="393" width="1" height="8" fill="#089981"/><rect x="847" y="397" width="3" height="1" fill="#089981"/><rect x="851" y="398" width="1" height="19" fill="#089981"/><rect x="850" y="400" width="3" height="15" fill="#089981"/><rect x="853" y="399" width="1" height="7" fill="#f23645"/><rect x="852" y="402" width="3" height="2" fill="#f23645"/><rect x="856" y="393" width="1" height="10" fill="#089981"/><rect x="855" y="397" width="3" height="4" fill="#089981"/><rect x="858" y="379" width="1" height="9" fill="#089981"/><rect x="857" y="381" width="3" height="5" fill="#089981"/><rect x="861" y="370" width="1" height="12" fill="#f23645"/><rect x="860" y="373" width="3" height="4" fill="#f23645"/><rect x="864" y="379" width="1" height="10" fill="#f23645"/><rect x="863" y="382" width="3" height="4" fill="#f23645"/><rect x="866" y="374" width="1" height="10" fill="#089981"/><rect x="865" y="378" width="3" height="3" fill="#089981"/><rect x="868" y="379" width="1" height="11" fill="#089981"/><rect x="867" y="386" width="3" height="2" fill="#089981"/><rect x="871" y="379" width="1" height="13" fill="#f23645"/><rect x="870" y="384" width="3" height="4" fill="#f23645"/><rect x="874" y="392" width="1" height="10" fill="#f23645"/><rect x="873" y="393" width="3" height="5" fill="#f23645"/><rect x="876" y="400" width="1" height="10" fill="#f23645"/><rect x="875" y="402" width="3" height="7" fill="#f23645"/><rect x="879" y="415" width="1" height="13" fill="#f23645"/><rect x="878" y="418" width="3" height="8" fill="#f23645"/><rect x="881" y="413" width="1" height="10" fill="#f23645"/><rect x="880" y="420" width="3" height="1" fill="#f23645"/><rect x="884" y="416" width="1" height="19" fill="#089981"/><rect x="883" y="417" width="3" height="6" fill="#089981"/><rect x="886" y="413" width="1" height="8" fill="#089981"/><rect x="885" y="415" width="3" height="4" fill="#089981"/><rect x="889" y="398" width="1" height="19" fill="#089981"/><rect x="888" y="407" width="3" height="8" fill="#089981"/><rect x="891" y="414" width="1" height="10" fill="#f23645"/><rect x="890" y="416" width="3" height="7" fill="#f23645"/><rect x="894" y="420" width="1" height="7" fill="#f23645"/><rect x="893" y="422" width="3" height="3" fill="#f23645"/><rect x="897" y="423" width="1" height="9" fill="#089981"/><rect x="896" y="425" width="3" height="4" fill="#089981"/><rect x="900" y="412" width="1" height="11" fill="#089981"/><rect x="899" y="414" width="3" height="7" fill="#089981"/><rect x="902" y="408" width="1" height="5" fill="#f23645"/><rect x="901" y="409" width="3" height="3" fill="#f23645"/><rect x="905" y="413" width="1" height="6" fill="#089981"/><rect x="904" y="416" width="3" height="2" fill="#089981"/><rect x="907" y="423" width="1" height="8" fill="#f23645"/><rect x="906" y="425" width="3" height="2" fill="#f23645"/><rect x="910" y="444" width="1" height="11" fill="#f23645"/><rect x="909" y="445" width="3" height="9" fill="#f23645"/><rect x="912" y="442" width="1" height="9" fill="#f23645"/><rect x="911" y="443" width="3" height="6" fill="#f23645"/><rect x="915" y="442" width="1" height="5" fill="#f23645"/><rect x="914" y="444" width="3" height="1" fill="#f23645"/><rect x="917" y="449" width="1" height="8" fill="#f23645"/><rect x="916" y="453" width="3" height="3" fill="#f23645"/><rect x="920" y="437" width="1" height="5" fill="#f23645"/><rect x="919" y="438" width="3" height="3" fill="#f23645"/><rect x="922" y="450" width="1" height="7" fill="#089981"/><rect x="921" y="452" width="3" height="2" fill="#089981"/><rect x="925" y="442" width="1" height="9" fill="#f23645"/><rect x="924" y="443" width="3" height="5" fill="#f23645"/><rect x="927" y="455" width="1" height="8" fill="#f23645"/><rect x="926" y="458" width="3" height="2" fill="#f23645"/><rect x="930" y="467" width="1" height="10" fill="#f23645"/><rect x="929" y="471" width="3" height="2" fill="#f23645"/><rect x="932" y="475" width="1" height="15" fill="#f23645"/><rect x="931" y="481" width="3" height="3" fill="#f23645"/><rect x="935" y="484" width="1" height="12" fill="#089981"/><rect x="934" y="490" width="3" height="1" fill="#089981"/><rect x="938" y="467" width="1" height="10" fill="#089981"/><rect x="937" y="472" width="3" height="1" fill="#089981"/><rect x="940" y="476" width="1" height="5" fill="#f23645"/><rect x="939" y="477" width="3" height="2" fill="#f23645"/><rect x="943" y="479" width="1" height="9" fill="#f23645"/><rect x="942" y="480" width="3" height="6" fill="#f23645"/><rect x="945" y="470" width="1" height="11" fill="#089981"/><rect x="944" y="475" width="3" height="2" fill="#089981"/><rect x="948" y="464" width="1" height="8" fill="#f23645"/><rect x="947" y="466" width="3" height="3" fill="#f23645"/><rect x="950" y="469" width="1" height="6" fill="#089981"/><rect x="949" y="470" width="3" height="4" fill="#089981"/><rect x="953" y="467" width="1" height="10" fill="#089981"/><rect x="952" y="469" width="3" height="5" fill="#089981"/><rect x="955" y="459" width="1" height="8" fill="#f23645"/><rect x="954" y="461" width="3" height="2" fill="#f23645"/><rect x="958" y="453" width="1" height="10" fill="#089981"/><rect x="957" y="455" width="3" height="6" fill="#089981"/><rect x="961" y="450" width="1" height="12" fill="#f23645"/><rect x="960" y="456" width="3" height="4" fill="#f23645"/><rect x="963" y="464" width="1" height="8" fill="#089981"/><rect x="962" y="466" width="3" height="5" fill="#089981"/><rect x="966" y="455" width="1" height="5" fill="#f23645"/><rect x="965" y="456" width="3" height="3" fill="#f23645"/><rect x="968" y="442" width="1" height="8" fill="#089981"/><rect x="967" y="444" width="3" height="1" fill="#089981"/><rect x="971" y="439" width="1" height="8" fill="#089981"/><rect x="970" y="444" width="3" height="1" fill="#089981"/><rect x="973" y="434" width="1" height="9" fill="#f23645"/><rect x="972" y="437" width="3" height="5" fill="#f23645"/><rect x="976" y="450" width="1" height="9" fill="#f23645"/><rect x="975" y="452" width="3" height="6" fill="#f23645"/><rect x="979" y="447" width="1" height="15" fill="#089981"/><rect x="978" y="449" width="3" height="4" fill="#089981"/><rect x="982" y="441" width="1" height="13" fill="#f23645"/><rect x="981" y="447" width="3" height="1" fill="#f23645"/><rect x="984" y="464" width="1" height="8" fill="#089981"/><rect x="983" y="466" width="3" height="5" fill="#089981"/><rect x="987" y="469" width="1" height="8" fill="#f23645"/><rect x="986" y="471" width="3" height="4" fill="#f23645"/><rect x="989" y="462" width="1" height="6" fill="#089981"/><rect x="988" y="464" width="3" height="2" fill="#089981"/><rect x="991" y="470" width="1" height="13" fill="#089981"/><rect x="990" y="476" width="3" height="1" fill="#089981"/><rect x="994" y="476" width="1" height="6" fill="#089981"/><rect x="993" y="477" width="3" height="1" fill="#089981"/><rect x="996" y="467" width="1" height="8" fill="#089981"/><rect x="995" y="471" width="3" height="1" fill="#089981"/><rect x="999" y="465" width="1" height="6" fill="#089981"/><rect x="998" y="466" width="3" height="3" fill="#089981"/><rect x="1002" y="470" width="1" height="6" fill="#f23645"/><rect x="1001" y="471" width="3" height="3" fill="#f23645"/><rect x="1004" y="470" width="1" height="8" fill="#f23645"/><rect x="1003" y="472" width="3" height="4" fill="#f23645"/><rect x="1007" y="470" width="1" height="6" fill="#089981"/><rect x="1006" y="471" width="3" height="4" fill="#089981"/><rect x="1009" y="467" width="1" height="7" fill="#089981"/><rect x="1008" y="469" width="3" height="3" fill="#089981"/><rect x="1012" y="465" width="1" height="8" fill="#089981"/><rect x="1011" y="468" width="3" height="3" fill="#089981"/><rect x="1015" y="445" width="1" height="14" fill="#089981"/><rect x="1014" y="453" width="3" height="1" fill="#089981"/><rect x="1017" y="429" width="1" height="13" fill="#089981"/><rect x="1016" y="432" width="3" height="2" fill="#089981"/><rect x="1020" y="434" width="1" height="6" fill="#f23645"/><rect x="1019" y="437" width="3" height="1" fill="#f23645"/><rect x="1023" y="444" width="1" height="10" fill="#089981"/><rect x="1022" y="446" width="3" height="3" fill="#089981"/><rect x="1025" y="452" width="1" height="7" fill="#089981"/><rect x="1024" y="455" width="3" height="1" fill="#089981"/><rect x="1028" y="457" width="1" height="7" fill="#089981"/><rect x="1027" y="459" width="3" height="3" fill="#089981"/><rect x="1030" y="448" width="1" height="12" fill="#f23645"/><rect x="1029" y="451" width="3" height="7" fill="#f23645"/><rect x="1032" y="450" width="1" height="18" fill="#089981"/><rect x="1031" y="452" width="3" height="14" fill="#089981"/><rect x="1035" y="449" width="1" height="9" fill="#089981"/><rect x="1034" y="452" width="3" height="3" fill="#089981"/><rect x="1037" y="431" width="1" height="10" fill="#089981"/><rect x="1036" y="432" width="3" height="7" fill="#089981"/><rect x="1040" y="435" width="1" height="6" fill="#089981"/><rect x="1039" y="436" width="3" height="1" fill="#089981"/><rect x="1043" y="439" width="1" height="11" fill="#f23645"/><rect x="1042" y="441" width="3" height="8" fill="#f23645"/><rect x="1045" y="431" width="1" height="8" fill="#089981"/><rect x="1044" y="432" width="3" height="5" fill="#089981"/><rect x="1048" y="412" width="1" height="15" fill="#089981"/><rect x="1047" y="421" width="3" height="2" fill="#089981"/><rect x="1051" y="422" width="1" height="7" fill="#089981"/><rect x="1050" y="425" width="3" height="1" fill="#089981"/><rect x="1053" y="436" width="1" height="8" fill="#f23645"/><rect x="1052" y="438" width="3" height="1" fill="#f23645"/><rect x="1056" y="431" width="1" height="11" fill="#089981"/><rect x="1055" y="432" width="3" height="8" fill="#089981"/><rect x="1058" y="432" width="1" height="9" fill="#089981"/><rect x="1057" y="434" width="3" height="5" fill="#089981"/><rect x="1061" y="433" width="1" height="7" fill="#f23645"/><rect x="1060" y="435" width="3" height="3" fill="#f23645"/><rect x="1064" y="445" width="1" height="10" fill="#089981"/><rect x="1063" y="448" width="3" height="4" fill="#089981"/><rect x="1066" y="441" width="1" height="8" fill="#f23645"/><rect x="1065" y="442" width="3" height="5" fill="#f23645"/><rect x="1068" y="444" width="1" height="9" fill="#f23645"/><rect x="1067" y="447" width="3" height="4" fill="#f23645"/><rect x="1071" y="457" width="1" height="6" fill="#f23645"/><rect x="1070" y="459" width="3" height="1" fill="#f23645"/><rect x="1073" y="467" width="1" height="6" fill="#089981"/><rect x="1072" y="469" width="3" height="2" fill="#089981"/><rect x="1076" y="473" width="1" height="10" fill="#f23645"/><rect x="1075" y="475" width="3" height="6" fill="#f23645"/><rect x="1078" y="474" width="1" height="9" fill="#089981"/><rect x="1077" y="479" width="3" height="3" fill="#089981"/><rect x="1081" y="468" width="1" height="13" fill="#f23645"/><rect x="1080" y="470" width="3" height="9" fill="#f23645"/><rect x="1084" y="474" width="1" height="7" fill="#089981"/><rect x="1083" y="476" width="3" height="3" fill="#089981"/><rect x="1086" y="470" width="1" height="8" fill="#089981"/><rect x="1085" y="471" width="3" height="5" fill="#089981"/><rect x="1089" y="462" width="1" height="5" fill="#089981"/><rect x="1088" y="464" width="3" height="2" fill="#089981"/><rect x="1092" y="455" width="1" height="10" fill="#089981"/><rect x="1091" y="459" width="3" height="4" fill="#089981"/></g>
<path d="M5.4,372.0 C9.0,370.9 19.6,367.2 27.1,365.3 C34.6,363.3 42.9,362.1 50.1,360.1 C57.4,358.1 63.0,355.7 70.5,353.1 C77.9,350.4 87.2,347.3 94.9,344.4 C102.5,341.5 109.3,338.4 116.5,335.4 C123.8,332.5 132.8,329.5 138.2,326.5 C143.6,323.5 144.1,320.1 149.1,317.3 C154.0,314.5 161.2,313.0 168.0,309.7 C174.8,306.4 183.4,301.1 189.7,297.5 C196.0,293.9 200.5,291.0 206.0,288.0 C211.4,285.1 217.7,281.9 222.2,279.9 C226.7,277.9 230.1,276.7 233.1,275.8 C236.0,274.9 236.7,274.9 240.1,274.5 C243.5,274.0 247.6,273.0 253.5,273.0 C259.4,273.0 268.7,274.2 275.8,274.4 C282.9,274.6 289.2,274.4 296.0,274.4 C302.8,274.4 310.0,273.8 316.5,274.4 C323.0,275.0 329.1,276.6 334.8,278.0 C340.6,279.4 345.6,280.8 351.0,283.0 C356.4,285.2 361.9,288.4 367.3,291.3 C372.7,294.2 378.2,297.6 383.5,300.4 C388.8,303.2 393.0,305.6 399.0,308.0 C405.0,310.4 412.1,312.9 419.3,315.0 C426.5,317.1 434.5,318.6 442.0,320.3 C449.5,322.0 457.0,323.2 464.5,325.3 C472.0,327.4 481.1,331.1 487.0,333.2 C492.9,335.3 494.1,335.5 500.0,338.0 C505.9,340.5 515.1,345.0 522.6,348.2 C530.1,351.4 537.5,354.4 545.0,357.2 C552.5,360.0 562.0,363.0 567.7,365.0 C573.4,367.0 574.5,368.1 579.0,369.2 C583.5,370.3 589.1,370.8 594.8,371.5 C600.4,372.2 607.6,373.1 612.9,373.7 C618.2,374.3 621.1,374.9 626.4,374.9 C631.7,374.9 638.5,373.8 644.5,373.7 C650.5,373.6 656.6,373.6 662.5,374.0 C668.4,374.4 675.4,375.8 680.0,376.3 C684.6,376.8 685.9,377.2 690.0,376.8 C694.1,376.4 699.5,375.1 704.8,373.8 C710.1,372.5 716.2,370.2 722.0,368.8 C727.8,367.4 733.4,366.2 739.6,365.6 C745.9,365.0 752.0,365.0 759.5,365.0 C767.0,365.0 776.9,365.2 784.3,365.6 C791.7,366.0 796.5,366.7 804.0,367.3 C811.5,367.9 820.7,368.8 829.0,369.3 C837.3,369.9 846.3,370.2 853.8,370.6 C861.2,371.0 869.3,371.3 873.7,371.8 C878.1,372.3 874.8,372.6 880.0,373.5 C885.2,374.4 896.5,375.3 904.8,377.2 C913.1,379.1 921.4,382.1 929.7,384.6 C938.0,387.1 946.2,389.9 954.5,392.0 C962.8,394.1 970.2,394.9 979.3,397.0 C988.4,399.1 999.9,402.5 1009.0,404.5 C1018.1,406.5 1026.5,408.0 1034.0,409.0 C1041.5,410.0 1048.0,410.1 1053.8,410.7 C1059.6,411.3 1062.5,411.3 1068.7,412.4 C1074.9,413.5 1087.3,416.6 1091.0,417.4" fill="none" stroke="#e0e0e0" stroke-width="1.1" stroke-linecap="round"/>
<path d="M5.4,342.2 C7.2,342.0 11.7,342.0 16.3,340.9 C20.8,339.7 27.1,337.3 32.5,335.4 C37.9,333.6 43.4,332.1 48.8,330.0 C54.2,328.0 59.6,325.5 65.0,323.3 C70.5,321.0 75.9,318.7 81.3,316.5 C86.7,314.2 92.1,312.2 97.6,309.7 C103.0,307.2 108.4,304.3 113.8,301.6 C119.2,298.9 126.0,295.7 130.1,293.4 C134.1,291.2 135.0,291.2 138.2,288.0 C141.4,284.9 145.0,277.9 149.1,274.5 C153.1,271.1 158.5,269.7 162.6,267.7 C166.7,265.7 168.9,265.4 173.4,262.3 C178.0,259.1 184.3,252.8 189.7,248.7 C195.1,244.7 200.5,241.0 206.0,237.9 C211.4,234.7 217.7,231.6 222.2,229.8 C226.7,227.9 230.1,227.6 233.1,227.0 C236.0,226.5 236.4,225.9 240.1,226.2 C243.8,226.5 250.6,227.2 255.5,228.9 C260.4,230.6 264.6,234.3 269.7,236.4 C274.8,238.5 280.2,240.2 286.0,241.5 C291.8,242.8 298.6,243.3 304.3,244.5 C310.1,245.7 315.4,246.6 320.5,248.6 C325.6,250.6 329.7,253.1 334.8,256.7 C339.9,260.3 345.6,265.1 351.0,270.0 C356.4,274.9 362.8,281.0 367.3,286.0 C371.8,291.0 374.8,296.0 378.2,300.0 C381.6,304.0 383.8,306.2 387.7,310.0 C391.6,313.8 396.0,318.8 401.3,322.6 C406.6,326.4 413.3,330.1 419.3,332.7 C425.3,335.3 431.4,336.7 437.4,338.4 C443.4,340.1 450.1,341.3 455.4,343.0 C460.7,344.7 463.7,345.9 469.0,348.5 C474.3,351.1 481.8,355.7 487.0,358.7 C492.2,361.7 494.8,363.0 500.0,366.3 C505.2,369.6 512.0,375.3 518.0,378.7 C524.0,382.1 530.0,383.8 536.0,386.6 C542.0,389.4 548.7,393.0 554.0,395.6 C559.3,398.2 563.9,400.5 567.7,402.4 C571.5,404.3 572.9,405.9 576.7,407.0 C580.5,408.1 585.8,409.0 590.3,409.0 C594.8,409.0 598.5,407.3 603.8,407.0 C609.1,406.7 616.6,407.6 621.9,407.0 C627.2,406.4 630.9,404.8 635.4,403.5 C639.9,402.2 645.2,399.9 649.0,399.0 C652.8,398.1 653.5,397.9 658.0,397.9 C662.5,397.9 670.7,399.0 676.0,399.0 C681.3,399.0 685.2,399.7 689.6,398.0 C694.0,396.3 697.7,392.1 702.3,389.0 C706.9,385.9 712.4,382.0 717.0,379.3 C721.6,376.6 725.1,374.7 729.7,373.0 C734.3,371.3 738.8,370.0 744.6,369.3 C750.4,368.6 757.8,368.9 764.4,368.8 C771.0,368.7 778.5,368.3 784.3,368.6 C790.1,368.9 793.4,369.7 799.2,370.6 C805.0,371.5 812.4,373.2 819.0,373.8 C825.6,374.4 832.4,373.8 839.0,374.3 C845.6,374.8 853.0,376.2 858.8,376.8 C864.6,377.4 868.7,377.0 873.7,378.0 C878.7,379.0 883.4,381.6 888.6,383.0 C893.8,384.4 898.8,384.6 904.8,386.6 C910.8,388.6 918.1,391.8 924.7,395.0 C931.3,398.2 938.0,402.5 944.6,405.7 C951.2,408.9 958.6,412.4 964.4,414.4 C970.2,416.3 974.3,416.0 979.3,417.4 C984.3,418.8 988.4,421.0 994.2,423.0 C1000.0,425.0 1007.4,427.8 1014.0,429.3 C1020.6,430.9 1027.4,431.8 1034.0,432.3 C1040.6,432.8 1048.0,432.1 1053.8,432.3 C1059.6,432.6 1062.5,432.6 1068.7,433.8 C1074.9,435.0 1087.3,438.4 1091.0,439.3" fill="none" stroke="#e03a4a" stroke-width="1.1" stroke-linecap="round"/>
<path d="M5.4,335.4 C6.8,335.2 9.9,335.4 13.6,334.1 C17.2,332.7 22.6,329.6 27.1,327.3 C31.6,325.1 36.1,322.9 40.7,320.5 C45.2,318.1 49.7,315.7 54.2,313.0 C58.7,310.2 63.2,307.1 67.8,304.3 C72.3,301.5 76.8,298.5 81.3,296.2 C85.8,293.8 90.3,292.7 94.9,290.2 C99.4,287.7 103.9,284.1 108.4,281.2 C112.9,278.4 117.4,276.1 122.0,273.1 C126.5,270.2 132.3,266.3 135.5,263.6 C138.7,260.9 139.1,259.8 140.9,256.9 C142.7,253.9 144.8,248.7 146.3,246.0 C147.9,243.3 148.6,242.1 150.4,240.6 C152.2,239.1 155.0,237.8 157.2,237.1 C159.4,236.3 161.0,237.2 163.7,236.0 C166.4,234.8 170.0,232.6 173.4,229.8 C176.9,226.9 180.7,222.3 184.3,218.9 C187.9,215.5 191.5,212.1 195.1,209.4 C198.7,206.7 202.3,204.7 206.0,202.7 C209.6,200.6 213.6,198.6 216.8,197.2 C220.0,195.9 222.4,195.2 224.9,194.5 C227.4,193.8 229.9,193.3 231.7,193.2 C233.5,193.0 234.2,193.1 235.8,193.7 C237.4,194.4 239.0,195.3 241.3,197.0 C243.6,198.7 246.0,200.9 249.4,203.9 C252.8,206.9 256.9,210.2 261.6,215.0 C266.3,219.8 272.7,228.8 277.8,233.0 C282.9,237.2 287.6,238.5 292.0,240.4 C296.4,242.3 300.6,243.3 304.3,244.5 C308.0,245.7 310.7,245.4 314.4,247.6 C318.1,249.8 322.5,253.6 326.6,257.7 C330.7,261.8 334.7,266.6 338.8,272.0 C342.9,277.4 347.9,285.3 351.0,290.0 C354.1,294.7 354.5,295.7 357.2,300.0 C359.9,304.3 363.8,309.4 367.4,315.8 C371.0,322.2 374.9,331.4 378.7,338.4 C382.5,345.4 386.6,352.7 390.0,357.6 C393.4,362.5 395.6,365.1 399.0,367.7 C402.4,370.3 406.9,371.9 410.3,373.4 C413.7,374.9 414.8,376.0 419.3,376.7 C423.8,377.4 431.4,377.2 437.4,377.4 C443.4,377.6 450.9,377.5 455.4,377.9 C459.9,378.3 460.7,377.9 464.5,380.0 C468.3,382.1 473.5,387.6 478.0,390.3 C482.5,393.0 487.9,394.2 491.6,396.0 C495.3,397.8 497.1,398.9 500.0,401.3 C502.9,403.7 505.8,407.6 509.0,410.3 C512.2,413.0 516.0,416.1 519.0,417.5 C522.0,418.9 523.8,417.6 527.0,418.9 C530.2,420.1 534.2,422.9 538.4,425.0 C542.6,427.1 547.5,429.8 552.0,431.7 C556.5,433.6 561.2,434.9 565.5,436.7 C569.8,438.5 573.8,441.8 577.9,442.3 C582.0,442.8 586.7,441.2 590.3,439.6 C593.9,438.0 595.5,435.0 599.3,432.9 C603.1,430.8 609.1,428.5 612.9,427.2 C616.7,425.9 618.1,427.2 621.9,425.0 C625.6,422.8 631.3,417.1 635.4,413.7 C639.5,410.3 643.7,407.0 646.7,404.7 C649.7,402.4 650.1,400.8 653.5,400.0 C656.9,399.2 662.6,399.8 667.0,399.7 C671.4,399.6 676.2,399.6 680.0,399.5 C683.8,399.4 686.7,400.8 690.0,399.0 C693.3,397.2 696.2,393.1 699.9,389.0 C703.6,384.9 708.2,379.0 712.3,374.3 C716.4,369.6 721.2,363.9 724.7,360.6 C728.2,357.3 729.7,355.7 733.4,354.4 C737.1,353.1 742.6,352.6 747.0,352.7 C751.4,352.8 755.8,354.5 759.5,355.0 C763.2,355.5 765.3,355.0 769.4,355.7 C773.5,356.4 779.3,357.6 784.3,359.0 C789.3,360.4 794.2,362.5 799.2,364.4 C804.2,366.3 809.0,369.2 814.0,370.6 C819.0,372.0 824.4,372.4 829.0,373.0 C833.6,373.6 837.3,373.5 841.4,374.3 C845.5,375.1 849.2,377.0 853.8,378.0 C858.3,379.0 864.3,379.5 868.7,380.5 C873.1,381.5 874.0,381.5 880.0,383.9 C886.0,386.2 897.3,390.6 904.8,394.6 C912.2,398.7 918.9,403.6 924.7,408.2 C930.5,412.8 934.6,418.0 939.6,421.9 C944.6,425.8 950.0,429.3 954.5,431.8 C959.0,434.3 962.8,435.6 966.9,436.8 C971.0,438.0 974.8,437.4 979.3,438.8 C983.8,440.2 989.2,443.6 994.2,445.5 C999.2,447.4 1004.0,449.6 1009.0,450.4 C1014.0,451.1 1018.6,450.3 1024.0,450.0 C1029.4,449.7 1036.4,449.4 1041.4,448.7 C1046.4,447.9 1049.7,446.2 1053.8,445.5 C1057.9,444.8 1061.8,444.1 1066.0,444.7 C1070.2,445.3 1074.5,447.8 1078.7,449.2 C1082.9,450.6 1089.0,452.4 1091.0,453.0" fill="none" stroke="#e6d730" stroke-width="1.1" stroke-linecap="round"/>
<line x1="149.900" y1="137.300" x2="1291" y2="450.200" stroke="#f0e034" stroke-width="1.250"/>
<path d="M5.4,734.6 L6.7,734.0 L9.4,716.3 L12.0,718.5 L14.7,726.0 L17.4,703.7 L20.0,694.3 L24.7,691.7 L28.0,698.4 L30.8,702.4 L32.7,701.0 L34.9,693.5 L37.8,704.5 L40.2,693.8 L42.9,693.0 L45.0,687.0 L48.3,690.3 L50.0,703.0 L52.8,687.6 L55.8,685.5 L61.0,692.2 L64.3,685.0 L67.8,669.4 L70.5,689.0 L73.0,695.0 L76.4,690.3 L80.4,689.0 L85.8,713.6 L89.0,701.8 L93.8,708.3 L97.9,691.7 L101.3,687.0 L104.0,667.5 L106.7,679.6 L108.6,701.0 L112.0,703.7 L116.6,695.7 L120.6,694.3 L124.7,688.4 L127.0,703.0 L130.0,686.3 L131.9,685.0 L135.4,675.6 L138.0,662.0 L140.8,648.8 L142.6,642.0 L146.0,642.0 L148.3,651.4 L150.0,654.0 L151.5,683.6 L152.8,731.3 L154.7,718.5 L157.6,716.3 L160.3,734.6 L163.0,736.4 L165.7,733.2 L167.8,720.6 L170.8,720.3 L173.0,707.7 L175.6,707.2 L178.8,689.5 L181.5,707.7 L185.5,703.7 L188.5,716.3 L190.6,705.6 L193.6,713.0 L195.7,709.0 L198.4,711.8 L202.4,712.6 L205.0,716.3 L207.2,721.7 L209.0,717.7 L212.0,731.3 L214.5,718.0 L219.8,717.0 L222.0,708.3 L224.7,717.0 L227.0,726.0 L229.8,720.3 L232.7,737.2 L235.0,754.7 L237.0,761.4 L240.0,754.0 L242.6,761.4 L245.3,770.8 L249.3,780.7 L252.8,759.5 L255.2,772.0 L258.7,782.8 L262.7,790.3 L265.4,776.0 L267.6,781.5 L270.8,770.8 L275.6,758.0 L278.0,766.7 L281.0,743.4 L283.0,741.3 L285.5,735.4 L290.9,744.0 L294.0,744.5 L296.0,732.4 L298.4,736.0 L302.0,746.6 L304.0,718.5 L307.0,730.5 L311.5,737.2 L314.2,734.6 L319.0,756.0 L325.0,772.0 L327.0,757.3 L331.6,772.0 L335.0,764.0 L338.3,772.0 L342.6,782.8 L345.8,780.0 L349.9,780.0 L352.7,790.9 L354.8,793.5 L357.8,803.0 L362.3,778.8 L365.3,780.0 L368.2,790.9 L371.0,795.7 L372.8,796.2 L376.0,800.2 L378.4,788.0 L381.0,774.8 L383.5,777.5 L386.2,770.8 L388.9,768.9 L391.0,764.0 L393.7,764.9 L396.9,752.0 L399.0,745.3 L401.5,726.5 L404.0,714.5 L406.8,718.5 L409.0,731.3 L411.9,733.2 L413.5,722.5 L416.5,715.8 L418.9,713.6 L422.4,702.4 L427.0,690.6 L429.0,699.7 L431.8,715.3 L434.5,711.2 L436.9,719.8 L439.8,721.7 L442.5,719.8 L445.0,714.5 L448.4,715.8 L450.8,711.8 L455.0,701.8 L457.2,713.0 L460.0,738.6 L462.6,742.6 L465.3,762.7 L468.0,776.0 L471.0,766.0 L472.8,771.3 L475.5,756.0 L478.0,741.3 L480.8,734.6 L483.5,738.6 L488.0,744.7 L491.6,746.6 L495.6,752.0 L498.8,762.7 L501.0,755.5 L503.6,769.4 L506.3,780.0 L509.0,788.2 L510.9,776.0 L514.0,748.0 L516.8,760.0 L518.9,748.0 L521.8,722.5 L525.0,717.0 L527.5,729.2 L530.0,739.9 L532.3,742.0 L535.0,747.0 L536.9,735.4 L539.8,736.4 L542.5,745.3 L545.7,753.3 L548.4,756.0 L552.4,742.6 L555.4,731.9 L557.8,737.2 L560.0,740.7 L563.0,716.3 L565.8,723.8 L568.5,744.0 L571.0,755.2 L573.3,737.2 L575.7,739.9 L577.9,741.3 L580.6,705.9 L582.7,713.6 L585.4,708.6 L588.6,718.0 L591.3,706.4 L594.5,690.3 L596.0,686.8 L598.8,691.0 L601.0,702.4 L603.6,709.4 L606.8,708.3 L609.0,721.0 L612.7,716.6 L615.4,718.5 L618.6,721.7 L621.8,717.7 L624.0,693.0 L626.7,694.3 L629.6,685.5 L632.0,697.0 L634.7,694.3 L636.9,686.8 L639.5,686.3 L642.2,694.3 L644.9,697.8 L647.6,691.0 L649.7,698.4 L653.0,721.0 L655.6,734.6 L657.8,743.4 L659.7,732.7 L662.3,736.7 L665.0,744.7 L668.2,733.2 L670.9,722.5 L673.0,732.7 L675.7,733.2 L677.6,739.9 L680.3,745.3 L683.0,752.0 L685.9,742.6 L688.6,725.2 L690.5,701.0 L694.0,693.0 L697.0,683.6 L700.7,675.0 L705.0,670.8 L709.4,667.5 L713.4,665.7 L718.2,661.4 L722.0,659.0 L724.0,678.3 L726.8,699.0 L729.8,691.0 L732.7,703.7 L734.9,715.8 L737.0,734.6 L739.7,744.0 L742.4,734.0 L744.8,744.0 L746.9,744.5 L749.9,757.3 L752.3,751.4 L755.0,748.5 L757.9,761.4 L760.6,749.3 L763.0,741.3 L764.9,727.9 L767.6,738.6 L770.2,749.3 L773.2,763.2 L776.0,753.3 L778.6,739.9 L781.0,723.0 L783.4,737.8 L787.0,738.6 L788.7,742.6 L791.0,753.9 L793.8,745.3 L796.0,752.0 L798.7,754.0 L801.0,745.8 L804.0,746.6 L805.9,761.4 L808.6,764.0 L811.3,760.0 L814.7,753.3 L817.0,753.3 L819.3,748.0 L822.0,733.2 L824.0,733.2 L826.8,726.0 L829.0,725.2 L832.0,718.5 L834.9,718.0 L837.3,719.8 L839.7,730.5 L842.0,746.6 L844.8,752.5 L846.9,750.6 L850.0,755.5 L852.8,758.7 L855.5,742.6 L858.2,723.8 L860.3,722.5 L862.7,729.7 L864.9,716.6 L867.6,725.2 L870.2,738.6 L872.9,748.0 L875.6,756.0 L878.0,774.0 L882.3,763.2 L885.5,756.8 L888.2,745.3 L890.9,760.6 L893.6,763.2 L895.7,764.0 L898.4,745.3 L901.0,740.5 L904.3,745.8 L906.4,762.7 L909.0,778.8 L911.3,771.3 L914.0,766.2 L916.6,774.8 L919.0,754.7 L921.4,764.0 L923.9,758.7 L926.5,765.4 L929.2,777.5 L931.9,784.0 L935.0,785.5 L937.0,759.5 L939.4,763.5 L941.8,768.0 L944.5,758.7 L947.2,752.5 L949.9,753.9 L953.4,747.4 L956.0,740.5 L958.2,732.7 L960.9,739.9 L963.3,746.0 L966.2,727.9 L968.9,717.7 L970.8,715.0 L973.2,713.6 L975.9,733.2 L978.0,725.7 L980.7,727.9 L982.8,745.3 L985.5,754.7 L987.7,740.5 L990.3,748.0 L992.8,753.3 L995.7,741.3 L998.4,738.6 L1000.8,746.6 L1003.5,747.4 L1005.6,741.3 L1008.3,739.9 L1011.0,735.9 L1013.7,710.4 L1016.9,692.2 L1020.4,709.0 L1023.9,727.0 L1027.0,731.9 L1030.3,729.2 L1032.4,726.5 L1034.6,713.0 L1037.0,700.5 L1039.7,710.4 L1041.8,723.0 L1044.5,702.4 L1046.9,689.5 L1049.3,705.0 L1051.7,722.0 L1054.4,715.8 L1057.0,718.0 L1060.0,720.3 L1062.5,733.2 L1064.6,731.3 L1067.3,735.9 L1069.5,745.8 L1072.2,753.3 L1074.9,762.0 L1077.8,764.0 L1081.0,758.7 L1085.0,750.6 L1087.7,739.9 L1091.2,728.7" fill="none" stroke="#7e57c2" stroke-width="1.1" stroke-linejoin="round" stroke-linecap="round" />
</svg>
<svg class="abs" style="left:0;top:0" width="1380" height="45" viewBox="0 0 1380 45"><circle cx="19" cy="20.800" r="5.600" stroke="#d1d4dc" fill="none" stroke-width="1.2" stroke-linecap="round" stroke-linejoin="round" stroke-width="1.500"/><path d="M23.100 25L26.800 28.800" stroke="#d1d4dc" fill="none" stroke-width="1.2" stroke-linecap="round" stroke-linejoin="round" stroke-width="1.500"/><circle cx="119.5" cy="22.5" r="9.3" stroke="#d1d4dc" fill="none" stroke-width="1.2" stroke-linecap="round" stroke-linejoin="round"/><path d="M115 22.5h9M119.5 18v9" stroke="#d1d4dc" fill="none" stroke-width="1.2" stroke-linecap="round" stroke-linejoin="round"/><g fill="#363a45"><rect x="143" y="11" width="1" height="22"/><rect x="189" y="11" width="1" height="22"/><rect x="236" y="11" width="1" height="22"/><rect x="391" y="11" width="1" height="22"/><rect x="561" y="11" width="1" height="22"/></g><rect x="207.400" y="15.500" width="4" height="13" stroke="#d1d4dc" fill="none" stroke-width="1.2" stroke-linecap="round" stroke-linejoin="round"/><path d="M209.400 12.200v3.300M209.400 28.500v3.300" stroke="#d1d4dc" fill="none" stroke-width="1.2" stroke-linecap="round" stroke-linejoin="round"/><rect x="215.700" y="18.300" width="4" height="7.200" stroke="#d1d4dc" fill="none" stroke-width="1.2" stroke-linecap="round" stroke-linejoin="round"/><path d="M217.700 15.200v3.100M217.700 25.500v3.300" stroke="#d1d4dc" fill="none" stroke-width="1.2" stroke-linecap="round" stroke-linejoin="round"/><path d="M252.200 19.600l4.800-5 4 3.400 7.600-5" stroke="#d1d4dc" fill="none" stroke-width="1.2" stroke-linecap="round" stroke-linejoin="round"/><path d="M252.500 30.300v-4.100h4.600v4.100M257.100 26.200v-2.700h4.900v6.800M264.300 30.300v-9.900h4.500v9.900M252 30.300h17" stroke="#d1d4dc" fill="none" stroke-width="1.2" stroke-linecap="round" stroke-linejoin="round"/><rect x="360.5" y="14.5" width="6" height="6" rx="1.3" stroke="#d1d4dc" fill="none" stroke-width="1.2" stroke-linecap="round" stroke-linejoin="round"/><rect x="370" y="14.5" width="6" height="6" rx="1.3" stroke="#d1d4dc" fill="none" stroke-width="1.2" stroke-linecap="round" stroke-linejoin="round"/><rect x="360.5" y="24" width="6" height="6" rx="1.3" stroke="#d1d4dc" fill="none" stroke-width="1.2" stroke-linecap="round" stroke-linejoin="round"/><rect x="370" y="24" width="6" height="6" rx="1.3" stroke="#d1d4dc" fill="none" stroke-width="1.2" stroke-linecap="round" stroke-linejoin="round"/><path d="M421.5 27.5A8 8 0 1 1 422.6 21" stroke="#d1d4dc" fill="none" stroke-width="1.2" stroke-linecap="round" stroke-linejoin="round"/><path d="M414.5 17v5.5h-4" stroke="#d1d4dc" fill="none" stroke-width="1.2" stroke-linecap="round" stroke-linejoin="round"/><path d="M406 17.5a3.2 3.2 0 0 1 4-3.6M423 17.5a3.2 3.2 0 0 0-4-3.6" stroke="#d1d4dc" fill="none" stroke-width="1.2" stroke-linecap="round" stroke-linejoin="round"/><path d="M420.500 24.700v8.600M416.200 29h8.600" stroke="#d1d4dc" fill="none" stroke-width="1.2" stroke-linecap="round" stroke-linejoin="round"/><path d="M490.600 17.700v9.600l-6-4.800zM498.700 17.700v9.600l-6-4.800z" stroke="#d1d4dc" fill="none" stroke-width="1" stroke-linejoin="round"/><path d="M582.5 17l-4.5 4 4.500 4M578.5 21h7a5.500 5.500 0 0 1 5.500 5.500" stroke="#d1d4dc" fill="none" stroke-width="1.2" stroke-linecap="round" stroke-linejoin="round"/><path d="M624.500 17l4.500 4-4.500 4M628.500 21h-7a5.500 5.500 0 0 0-5.500 5.500" stroke="#50535e" fill="none" stroke-width="1.200" stroke-linecap="round" stroke-linejoin="round"/></svg>
<div class="t" style="left:31.2px;top:16.2px;font-size:13px;color:#d1d4dc;letter-spacing:-1.53px;font-weight:bold;">DBB</div>
<div class="t" style="left:162.5px;top:15.7px;font-size:14px;color:#d1d4dc;letter-spacing:0.00px;">D</div>
<div class="t" style="left:277.0px;top:15.7px;font-size:14px;color:#d1d4dc;letter-spacing:0.03px;">Indicators</div>
<div class="t" style="left:431.2px;top:15.7px;font-size:14px;color:#d1d4dc;letter-spacing:0.45px;">Alert</div>
<div class="t" style="left:507.0px;top:15.7px;font-size:14px;color:#d1d4dc;letter-spacing:-0.72px;">Replay</div>
<div class="abs" style="left:795px;top:6px;width:365.5px;height:37.5px;border-radius:6px;background:#1e222d;box-shadow:0 2px 4px rgba(0,0,0,.45)"></div>
<svg class="abs" style="left:0;top:0" width="1380" height="50" viewBox="0 0 1380 50"><rect x="803.5" y="19" width="2" height="2" rx="0.5" fill="#50535e"/><rect x="803.5" y="24.3" width="2" height="2" rx="0.5" fill="#50535e"/><rect x="803.5" y="29.6" width="2" height="2" rx="0.5" fill="#50535e"/><rect x="808.5" y="19" width="2" height="2" rx="0.5" fill="#50535e"/><rect x="808.5" y="24.3" width="2" height="2" rx="0.5" fill="#50535e"/><rect x="808.5" y="29.6" width="2" height="2" rx="0.5" fill="#50535e"/><path d="M830.5 32.500L845.500 17.500" stroke="#d1d4dc" fill="none" stroke-width="1.1" stroke-linecap="round"/><circle cx="829.3" cy="33.6" r="2.1" stroke="#d1d4dc" fill="#1e222d" stroke-width="1.1"/><circle cx="846.5" cy="16.4" r="2.1" stroke="#d1d4dc" fill="#1e222d" stroke-width="1.1"/><path d="M868.500 32.500L880 21" stroke="#d1d4dc" fill="none" stroke-width="1.1" stroke-linecap="round"/><path d="M884.500 17.500l-1.700 7.800-6-6z" fill="#d1d4dc"/><circle cx="867.3" cy="33.6" r="2.1" stroke="#d1d4dc" fill="#1e222d" stroke-width="1.1"/><circle cx="884.5" cy="16.4" r="2.1" stroke="#d1d4dc" fill="#1e222d" stroke-width="1.1"/><rect x="905.500" y="16.500" width="17" height="17" stroke="#d1d4dc" fill="none" stroke-width="1.1" stroke-linecap="round"/><circle cx="905.5" cy="16.5" r="2.1" stroke="#d1d4dc" fill="#1e222d" stroke-width="1.1"/><circle cx="922.5" cy="16.5" r="2.1" stroke="#d1d4dc" fill="#1e222d" stroke-width="1.1"/><circle cx="905.5" cy="33.5" r="2.1" stroke="#d1d4dc" fill="#1e222d" stroke-width="1.1"/><circle cx="922.5" cy="33.5" r="2.1" stroke="#d1d4dc" fill="#1e222d" stroke-width="1.1"/><path d="M942.500 20.500L956 15.500M942.500 27.500h21.500M942 31.500h22M942 35.500h22" stroke="#d1d4dc" fill="none" stroke-width="1.1" stroke-linecap="round"/><circle cx="942.3" cy="20.5" r="2.1" stroke="#d1d4dc" fill="#1e222d" stroke-width="1.1"/><circle cx="956.5" cy="15.4" r="2.1" stroke="#d1d4dc" fill="#1e222d" stroke-width="1.1"/><circle cx="942.3" cy="27.5" r="2.1" stroke="#d1d4dc" fill="#1e222d" stroke-width="1.1"/><path d="M979 15.500h22M979 21.500h21M979 27.500h22M980.500 33.500h20.500" stroke="#d1d4dc" fill="none" stroke-width="1.1" stroke-linecap="round"/><circle cx="1000.5" cy="21.5" r="2.1" stroke="#d1d4dc" fill="#1e222d" stroke-width="1.1"/><circle cx="979.5" cy="33.5" r="2.1" stroke="#d1d4dc" fill="#1e222d" stroke-width="1.1"/><path d="M1028.400 15v21" stroke="#d1d4dc" fill="none" stroke-width="1.1" stroke-linecap="round"/><circle cx="1028.4" cy="25.5" r="2.1" stroke="#d1d4dc" fill="#1e222d" stroke-width="1.1"/><path d="M1056 25.500h21" stroke="#d1d4dc" fill="none" stroke-width="1.1" stroke-linecap="round"/><circle cx="1066.4" cy="25.5" r="2.1" stroke="#d1d4dc" fill="#1e222d" stroke-width="1.1"/><path d="M1096.500 25.500h18.500" stroke="#d1d4dc" fill="none" stroke-width="1.1" stroke-linecap="round"/><circle cx="1096.5" cy="25.5" r="2.1" stroke="#d1d4dc" fill="#1e222d" stroke-width="1.1"/><path d="M1135 30L1146.500 18.500M1140.500 35.500L1153 23" stroke="#d1d4dc" fill="none" stroke-width="1.1" stroke-linecap="round"/><circle cx="1134" cy="30.7" r="2.1" stroke="#d1d4dc" fill="#1e222d" stroke-width="1.1"/><circle cx="1147.3" cy="17.5" r="2.1" stroke="#d1d4dc" fill="#1e222d" stroke-width="1.1"/><circle cx="1146.3" cy="29.5" r="2.1" stroke="#d1d4dc" fill="#1e222d" stroke-width="1.1"/></svg>
<div class="abs" style="left:13.900px;top:51.850px;width:18.200px;height:18.200px;border-radius:50%;background:#000ad6"></div>
<svg class="abs" style="left:13.900px;top:51.850px" width="18.200" height="18.200" viewBox="0 0 18.200 18.200"><path d="M2.800 10.900L5.600 9.500L8.600 5.100L9.900 5.100L10.500 7.500L10 10.400L10.600 12.300L8.800 13.200L6.500 12.500L4.500 11.800Z" fill="#fff"/><path d="M9.900 5.200L11.700 8.200L15.100 11.500L14.600 12L12.500 10.200L11.800 11.800L10.900 12.300L10.800 8.500Z" fill="#fff" opacity="0.75"/></svg>
<div class="t" style="left:36.5px;top:53.9px;font-size:16px;color:#d1d4dc;letter-spacing:-0.48px;">Invesco DB Base Metals Fund · 1D · Arca</div>
<svg class="abs" style="left:327px;top:55px" width="13" height="12" viewBox="0 0 13 12"><path d="M0 0h12.500l-3.500 5.800 3.500 5.800h-12.500z" fill="#f7525f"/></svg>
<div class="abs" style="left:358px;top:52.500px;width:20px;height:18px;border-radius:9px 0 0 9px;background:#3a2e25"></div>
<div class="abs" style="left:378px;top:52.500px;width:20px;height:18px;border-radius:0 9px 9px 0;background:#46193a"></div>
<svg class="abs" style="left:358px;top:52.500px" width="40" height="18" viewBox="0 0 40 18"><circle cx="11" cy="9.800" r="2.900" fill="#ff9800"/><g stroke="#ff9800" stroke-width="1.300" stroke-linecap="round"><path d="M11 4.200v1.300M6.800 6l1 1M15.200 6l-1 1M5.300 10.500h1.500M15.200 10.500h1.500M5.500 13.300h11"/></g><g stroke="#e91e63" stroke-width="1.400" fill="none" stroke-linecap="round"><path d="M26 7.500q2-2 4 0t4 0M26 11.500q2-2 4 0t4 0"/></g></svg>
<div class="t" style="left:415.0px;top:55.9px;font-size:13px;color:#d1d4dc;letter-spacing:0.00px;">O</div>
<div class="t" style="left:424.0px;top:55.9px;font-size:13px;color:#0c9d85;letter-spacing:-0.06px;">18.09</div>
<div class="t" style="left:463.0px;top:55.9px;font-size:13px;color:#d1d4dc;letter-spacing:0.00px;">H</div>
<div class="t" style="left:473.0px;top:55.9px;font-size:13px;color:#0c9d85;letter-spacing:0.07px;">18.23</div>
<div class="t" style="left:512.7px;top:55.9px;font-size:13px;color:#d1d4dc;letter-spacing:0.00px;">L</div>
<div class="t" style="left:520.4px;top:55.9px;font-size:13px;color:#0c9d85;letter-spacing:-0.06px;">18.09</div>
<div class="t" style="left:559.6px;top:55.9px;font-size:13px;color:#d1d4dc;letter-spacing:0.00px;">C</div>
<div class="t" style="left:568.7px;top:55.9px;font-size:13px;color:#0c9d85;letter-spacing:-0.43px;">18.21</div>
<div class="t" style="left:607.8px;top:55.9px;font-size:13px;color:#0c9d85;letter-spacing:-0.26px;">+0.14 (+0.77%)</div>
<div class="abs" style="left:13px;top:77px;width:49px;height:24px;border:1px solid #f23645;border-radius:4px"></div>
<div class="t" style="left:21.5px;top:83.2px;font-size:13px;color:#f23645;letter-spacing:-0.13px;">18.08</div>
<div class="t" style="left:70.3px;top:83.7px;font-size:12px;color:#d1d4dc;letter-spacing:-0.62px;">3.92</div>
<div class="abs" style="left:100px;top:77px;width:49px;height:24px;border:1px solid #2962ff;border-radius:4px"></div>
<div class="t" style="left:108.5px;top:83.2px;font-size:13px;color:#3b78ff;letter-spacing:-0.13px;">22.00</div>
<div class="abs" style="left:14.500px;top:107.500px;width:31px;height:20px;border:1px solid #363a45;border-radius:3px"></div>
<svg class="abs" style="left:21px;top:113px" width="10" height="8" viewBox="0 0 10 8"><path d="M1.500 2.500l3.500 3 3.500-3" stroke="#d1d4dc" stroke-width="1.400" fill="none" stroke-linecap="round" stroke-linejoin="round"/></svg>
<div class="t" style="left:34.0px;top:111.1px;font-size:13px;color:#d1d4dc;letter-spacing:0.00px;">2</div>
<div class="abs" style="left:1325px;top:50px;width:44px;height:25px;border:1px solid #363a45;border-radius:4px"></div>
<div class="t" style="left:1329.5px;top:56.1px;font-size:12px;color:#d1d4dc;letter-spacing:-1.17px;">USD</div>
<svg class="abs" style="left:1357px;top:60px" width="8" height="6" viewBox="0 0 8 6"><path d="M1.300 1.500l2.700 2.500 2.700-2.500" stroke="#d1d4dc" stroke-width="1.200" fill="none" stroke-linecap="round" stroke-linejoin="round"/></svg>
<div class="t" style="left:1329.3px;top:99.9px;font-size:12px;color:#b2b5be;letter-spacing:-0.58px;">28.00</div>
<div class="t" style="left:1329.3px;top:160.9px;font-size:12px;color:#b2b5be;letter-spacing:-0.58px;">26.00</div>
<div class="t" style="left:1329.3px;top:192.9px;font-size:12px;color:#b2b5be;letter-spacing:-0.58px;">25.00</div>
<div class="t" style="left:1329.3px;top:225.9px;font-size:12px;color:#b2b5be;letter-spacing:-0.58px;">24.00</div>
<div class="t" style="left:1329.3px;top:260.9px;font-size:12px;color:#b2b5be;letter-spacing:-0.58px;">23.00</div>
<div class="t" style="left:1329.3px;top:296.9px;font-size:12px;color:#b2b5be;letter-spacing:-0.58px;">22.00</div>
<div class="t" style="left:1329.3px;top:334.9px;font-size:12px;color:#b2b5be;letter-spacing:-0.58px;">21.00</div>
<div class="t" style="left:1329.3px;top:375.4px;font-size:12px;color:#b2b5be;letter-spacing:-0.58px;">20.00</div>
<div class="t" style="left:1329.3px;top:416.9px;font-size:12px;color:#b2b5be;letter-spacing:-0.58px;">19.00</div>
<div class="t" style="left:1329.3px;top:461.4px;font-size:12px;color:#b2b5be;letter-spacing:-0.58px;">18.00</div>
<div class="t" style="left:1329.3px;top:497.9px;font-size:12px;color:#b2b5be;letter-spacing:-0.58px;">17.20</div>
<div class="t" style="left:1329.3px;top:536.9px;font-size:12px;color:#b2b5be;letter-spacing:-0.58px;">16.40</div>
<div class="t" style="left:1329.3px;top:567.9px;font-size:12px;color:#b2b5be;letter-spacing:-0.58px;">15.80</div>
<div class="t" style="left:1329.3px;top:598.9px;font-size:12px;color:#b2b5be;letter-spacing:-0.58px;">15.20</div>
<div class="t" style="left:1329.3px;top:628.9px;font-size:12px;color:#b2b5be;letter-spacing:-0.58px;">14.65</div>
<div class="t" style="left:1329.3px;top:649.4px;font-size:12px;color:#b2b5be;letter-spacing:-0.58px;">80.00</div>
<div class="t" style="left:1329.3px;top:698.9px;font-size:12px;color:#b2b5be;letter-spacing:-0.58px;">60.00</div>
<div class="t" style="left:1329.3px;top:748.4px;font-size:12px;color:#b2b5be;letter-spacing:-0.58px;">40.00</div>
<div class="t" style="left:1329.3px;top:797.9px;font-size:12px;color:#b2b5be;letter-spacing:-0.58px;">20.00</div>
<div class="abs" style="left:1290px;top:449px;width:30px;height:17px;border-radius:3px 0 0 3px;background:#089981"></div>
<div class="abs" style="left:1321px;top:449px;width:41.500px;height:17px;border-radius:0 3px 3px 0;background:#089981"></div>
<div class="t" style="left:1294.5px;top:452.2px;font-size:12px;color:#fff;letter-spacing:-2.34px;">DBB</div>
<div class="t" style="left:1330.0px;top:452.2px;font-size:12px;color:#fff;letter-spacing:-0.88px;">18.21</div>
<div class="t" style="left:24.0px;top:826.4px;font-size:12px;color:#b2b5be;letter-spacing:0.27px;font-weight:bold;">2022</div>
<div class="t" style="left:126.8px;top:826.4px;font-size:12px;color:#b2b5be;letter-spacing:0.42px;">Mar</div>
<div class="t" style="left:237.0px;top:826.4px;font-size:12px;color:#b2b5be;letter-spacing:-0.34px;">May</div>
<div class="t" style="left:347.8px;top:826.4px;font-size:12px;color:#b2b5be;letter-spacing:-0.42px;">Jul</div>
<div class="t" style="left:454.8px;top:826.4px;font-size:12px;color:#b2b5be;letter-spacing:-0.43px;">Sep</div>
<div class="t" style="left:563.8px;top:826.4px;font-size:12px;color:#b2b5be;letter-spacing:-0.42px;">Nov</div>
<div class="t" style="left:667.5px;top:826.4px;font-size:12px;color:#b2b5be;letter-spacing:0.27px;font-weight:bold;">2023</div>
<div class="t" style="left:769.8px;top:826.4px;font-size:12px;color:#b2b5be;letter-spacing:0.42px;">Mar</div>
<div class="t" style="left:877.5px;top:826.4px;font-size:12px;color:#b2b5be;letter-spacing:-0.34px;">May</div>
<div class="t" style="left:991.2px;top:826.4px;font-size:12px;color:#b2b5be;letter-spacing:-0.42px;">Jul</div>
<div class="t" style="left:1097.8px;top:826.4px;font-size:12px;color:#b2b5be;letter-spacing:-0.43px;">Sep</div>
<div class="t" style="left:1206.5px;top:826.4px;font-size:12px;color:#b2b5be;letter-spacing:-0.42px;">Nov</div>
<div class="t" style="left:1308.0px;top:826.4px;font-size:12px;color:#b2b5be;letter-spacing:-0.35px;font-weight:bold;">20</div>
<svg class="abs" style="left:1338px;top:823px" width="20" height="20" viewBox="0 0 20 20"><path d="M6.500 4h7l3.700 6-3.700 6h-7l-3.700-6z" stroke="#b2b5be" stroke-width="1.400" fill="none" stroke-linejoin="round"/><circle cx="10" cy="10" r="1.900" stroke="#b2b5be" stroke-width="1.400" fill="none"/></svg>
<svg class="abs" style="left:647px;top:617px" width="23" height="23" viewBox="0 0 23 23"><circle cx="11.550" cy="11.400" r="9.500" stroke="#2962ff" stroke-width="2" fill="#131722"/></svg>
<div class="t" style="left:655.0px;top:622.8px;font-size:12.5px;color:#2962ff;letter-spacing:0.00px;font-weight:bold;">D</div>
<svg class="abs" style="left:16px;top:786px" width="34" height="22" viewBox="0 0 34 22"><g fill="#d1d4dc"><path d="M1.200 3.100h12.400v14.800h-6.950v-9.300h-5.450z"/><circle cx="17.900" cy="6" r="2.750"/><path d="M23 3.100h7.900l-5.600 14.800h-7.200z"/></g></svg>
<div class="t" style="left:54.5px;top:786.8px;font-size:20.5px;color:#d1d4dc;letter-spacing:0.72px;-webkit-text-stroke:0.85px #d1d4dc;">TradingView</div>
<div class="abs" style="left:5px;top:846px;width:1368px;height:1px;background:#2a2e39"></div>
<div class="t" style="left:19.6px;top:859.4px;font-size:14px;color:#d1d4dc;letter-spacing:-3.30px;">1D</div>
<div class="t" style="left:47.4px;top:859.4px;font-size:14px;color:#d1d4dc;letter-spacing:-2.60px;">5D</div>
<div class="t" style="left:75.8px;top:859.4px;font-size:14px;color:#d1d4dc;letter-spacing:-1.95px;">1M</div>
<div class="t" style="left:105.3px;top:859.4px;font-size:14px;color:#d1d4dc;letter-spacing:-1.55px;">3M</div>
<div class="t" style="left:134.7px;top:859.4px;font-size:14px;color:#d1d4dc;letter-spacing:-1.15px;">6M</div>
<div class="t" style="left:165.0px;top:859.4px;font-size:14px;color:#d1d4dc;letter-spacing:-2.35px;">YTD</div>
<div class="t" style="left:201.7px;top:859.4px;font-size:14px;color:#d1d4dc;letter-spacing:-3.52px;">1Y</div>
<div class="t" style="left:227.3px;top:859.4px;font-size:14px;color:#d1d4dc;letter-spacing:-2.82px;">5Y</div>
<div class="t" style="left:253.0px;top:859.4px;font-size:14px;color:#d1d4dc;letter-spacing:-0.28px;">All</div>
<div class="vsep" style="left:278px;top:855px;height:22px;background:#3a3e4a"></div>
<svg class="abs" style="left:290px;top:853px" width="24" height="24" viewBox="0 0 24 24"><g stroke="#d1d4dc" stroke-width="1.150" fill="none" stroke-linecap="round" stroke-linejoin="round"><path d="M3.500 11.600V7.100a2 2 0 0 1 2-2h13.300a2 2 0 0 1 2 2v11.700a2 2 0 0 1-2 2H12.200"/><path d="M3.500 8.800H20.800M8.600 3.200v3.500M15.600 3.200v3.500"/><path d="M2.200 17.500h7.200M6.100 14.200l3.300 3.300-3.300 3.300"/></g></svg>
<div class="t" style="left:1214.3px;top:859.4px;font-size:14px;color:#d1d4dc;letter-spacing:-0.47px;">04:12:04 (UTC-4)</div>
<div class="vsep" style="left:1327px;top:855px;height:22px;background:#3a3e4a"></div>
<div class="t" style="left:1338.3px;top:859.4px;font-size:14px;color:#d1d4dc;letter-spacing:-1.57px;">ADJ</div>
<svg class="abs" style="left:1373px;top:41px" width="7" height="845" viewBox="0 0 7 845"><rect x="4" y="4" width="3" height="841" fill="#131722"/><rect x="4" y="59" width="3" height="13" fill="#434651"/><rect x="4" y="109.5" width="3" height="1" fill="#2a2e39"/><rect x="4" y="94" width="3" height="13" fill="#f7525f"/><rect x="4" y="139.5" width="3" height="1" fill="#2a2e39"/><rect x="4" y="124" width="3" height="13" fill="#f7525f"/><rect x="4" y="169.5" width="3" height="1" fill="#2a2e39"/><rect x="4" y="154" width="3" height="13" fill="#f7525f"/><rect x="4" y="199.5" width="3" height="1" fill="#2a2e39"/><rect x="4" y="184" width="3" height="13" fill="#f7525f"/><rect x="4" y="229.5" width="3" height="1" fill="#2a2e39"/><rect x="4" y="214" width="3" height="13" fill="#f7525f"/><rect x="4" y="259.5" width="3" height="1" fill="#2a2e39"/><rect x="4" y="244" width="3" height="13" fill="#f7525f"/><rect x="4" y="289.5" width="3" height="1" fill="#2a2e39"/><rect x="4" y="319.5" width="3" height="1" fill="#2a2e39"/><rect x="4" y="304" width="3" height="13" fill="#f7525f"/><rect x="4" y="349.5" width="3" height="1" fill="#2a2e39"/><rect x="4" y="334" width="3" height="13" fill="#f7525f"/><rect x="4" y="379.5" width="3" height="1" fill="#2a2e39"/><rect x="4" y="364" width="3" height="13" fill="#f7525f"/><rect x="4" y="409.5" width="3" height="1" fill="#2a2e39"/><rect x="4" y="394" width="3" height="13" fill="#f7525f"/><rect x="4" y="439.5" width="3" height="1" fill="#2a2e39"/><rect x="4" y="424" width="3" height="13" fill="#f7525f"/><rect x="4" y="469.5" width="3" height="1" fill="#2a2e39"/><rect x="4" y="454" width="3" height="13" fill="#f7525f"/><rect x="4" y="499.5" width="3" height="1" fill="#2a2e39"/><rect x="4" y="484" width="3" height="13" fill="#f7525f"/><rect x="4" y="529.5" width="3" height="1" fill="#2a2e39"/><rect x="4" y="514" width="3" height="13" fill="#f7525f"/><rect x="4" y="559.5" width="3" height="1" fill="#2a2e39"/><rect x="4" y="544" width="3" height="13" fill="#f7525f"/><rect x="4" y="589.5" width="3" height="1" fill="#2a2e39"/><rect x="4" y="574" width="3" height="13" fill="#f7525f"/><rect x="4" y="619.5" width="3" height="1" fill="#2a2e39"/><rect x="4" y="604" width="3" height="13" fill="#f7525f"/><rect x="4" y="649.5" width="3" height="1" fill="#2a2e39"/><rect x="4" y="634" width="3" height="13" fill="#f7525f"/><rect x="4" y="679.5" width="3" height="1" fill="#2a2e39"/><rect x="4" y="664" width="3" height="13" fill="#f7525f"/><rect x="4" y="709.5" width="3" height="1" fill="#2a2e39"/><rect x="4" y="694" width="3" height="13" fill="#f7525f"/><rect x="4.500" y="145.500" width="4" height="30" fill="none" stroke="#2962ff" stroke-width="1"/></svg>
</body></html>
